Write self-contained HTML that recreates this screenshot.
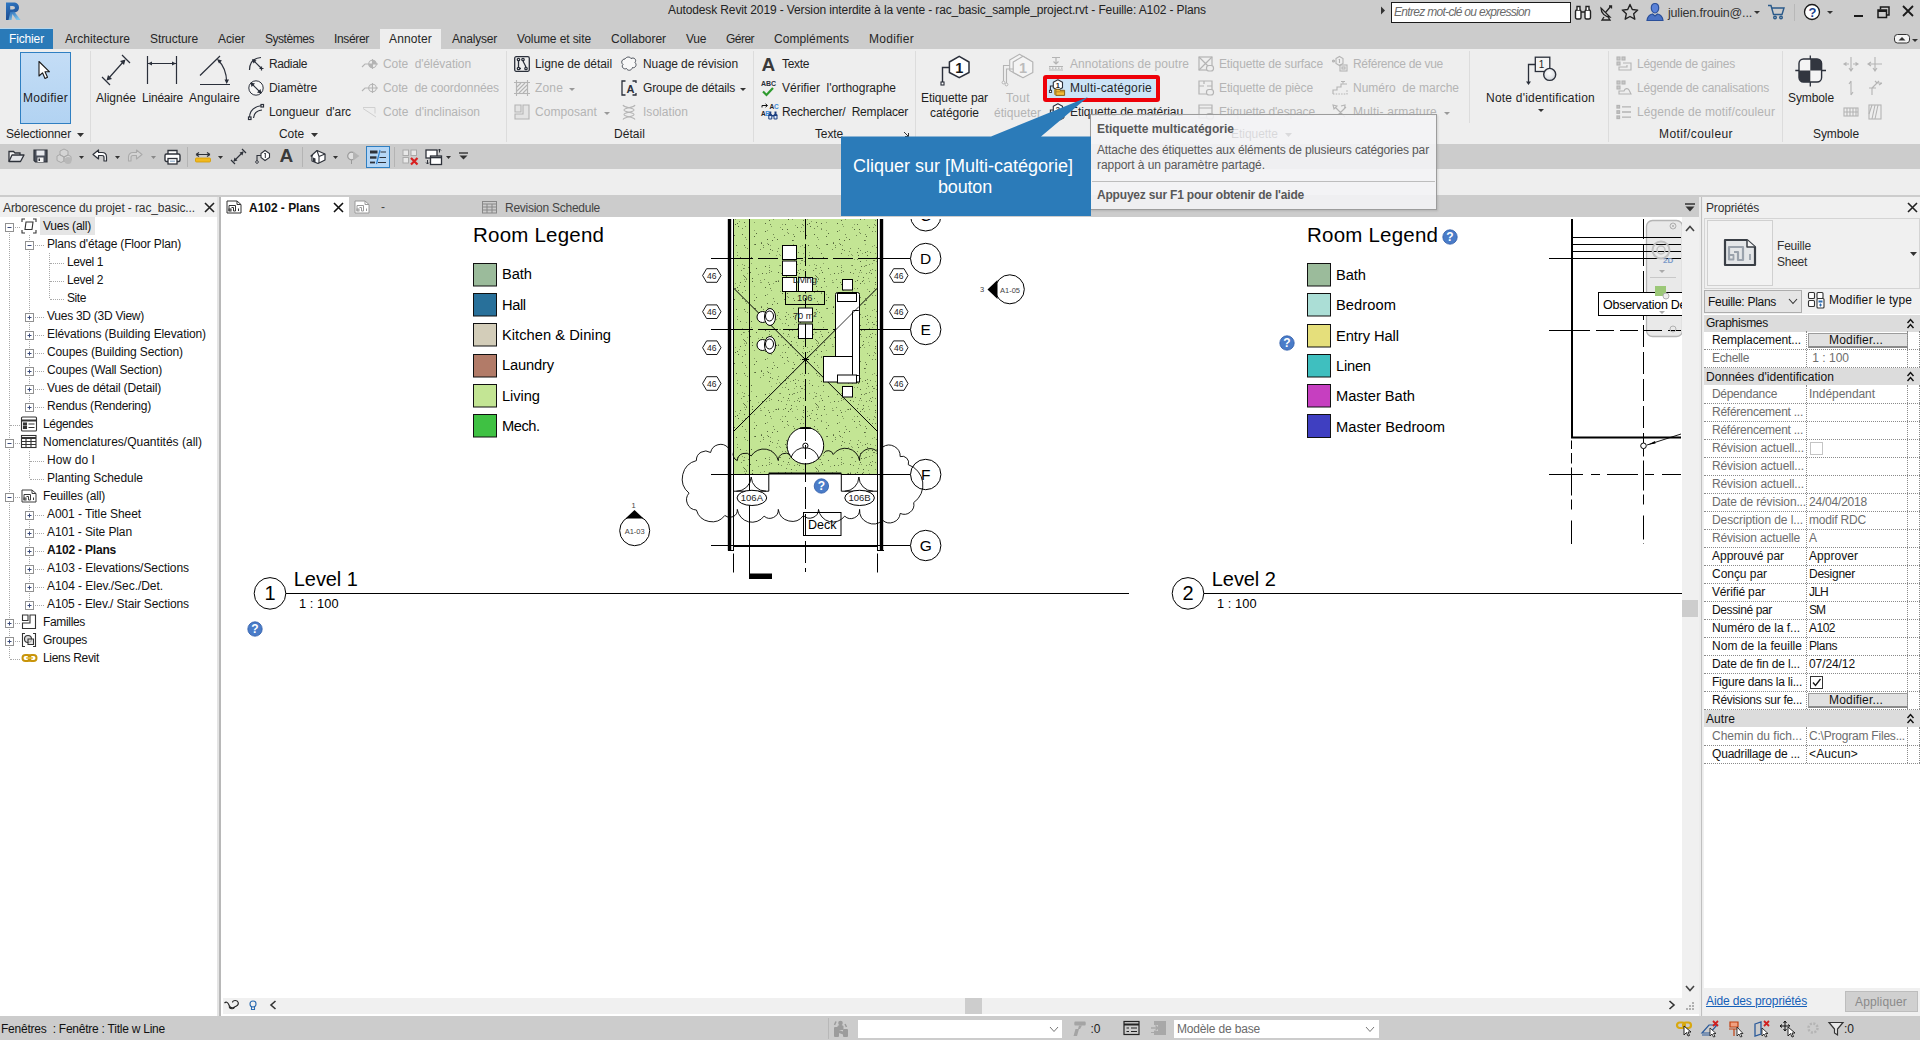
<!DOCTYPE html>
<html lang="fr"><head><meta charset="utf-8"><title>Autodesk Revit 2019</title>
<style>
html,body{margin:0;padding:0;}
body{width:1920px;height:1040px;overflow:hidden;background:#fff;position:relative;font-family:"Liberation Sans",sans-serif;font-size:12px;}
.t{position:absolute;white-space:pre;display:block;}
.b{position:absolute;display:block;overflow:visible;}
</style></head>
<body>
<div class="b" style="left:0px;top:197px;width:220px;height:820px;background:#f0f0f0;"></div><div class="b" style="left:0px;top:217px;width:217px;height:799px;background:#ffffff;"></div><div class="b" style="left:217px;top:197px;width:4px;height:819px;background:#e4e4e4;"></div><div class="b" style="left:219px;top:197px;width:1.5px;height:819px;background:#b8b8b8;"></div><span class="t" style="left:3px;top:199.0px;font-size:12px;line-height:18px;color:#333;letter-spacing:-0.111px;">Arborescence du projet - rac_basic...</span><svg class="b" style="left:204px;top:202px;" width="11" height="11" viewBox="0 0 11 11"><path d="M1 1L10 10M10 1L1 10" stroke="#222" stroke-width="1.600"/></svg><div class="b" style="left:9px;top:231px;width:0px;height:427px;border-left:1px dotted #a8a8a8;"></div><div class="b" style="left:29px;top:235px;width:0px;height:171px;border-left:1px dotted #a8a8a8;"></div><div class="b" style="left:49px;top:253px;width:0px;height:45px;border-left:1px dotted #a8a8a8;"></div><div class="b" style="left:29px;top:451px;width:0px;height:27px;border-left:1px dotted #a8a8a8;"></div><div class="b" style="left:29px;top:505px;width:0px;height:99px;border-left:1px dotted #a8a8a8;"></div><div class="b" style="left:40px;top:217px;width:55px;height:18px;background:#e5e5e5;"></div><div class="b" style="left:10px;top:227px;width:10px;height:0px;border-top:1px dotted #a8a8a8;"></div><svg class="b" style="left:4.5px;top:222.5px;" width="9" height="9" viewBox="0 0 9 9"><rect x="0.500" y="0.500" width="8" height="8" fill="#fff" stroke="#919191"/><path d="M2.500 4.500H6.500" stroke="#3a4a7a"/></svg><svg class="b" style="left:21px;top:218px;" width="16" height="16" viewBox="0 0 16 16"><g fill="none" stroke="#333" stroke-width="1.100"><path d="M1 4V1H4M12 1H15V4M15 12V15H12M4 15H1V12"/><path d="M5 4H12L11 11.500H4Z"/></g></svg><span class="t" style="left:43px;top:217.0px;font-size:12px;line-height:18px;color:#111;letter-spacing:-0.224px;">Vues (all)</span><div class="b" style="left:30px;top:245px;width:14px;height:0px;border-top:1px dotted #a8a8a8;"></div><svg class="b" style="left:24.5px;top:240.5px;" width="9" height="9" viewBox="0 0 9 9"><rect x="0.500" y="0.500" width="8" height="8" fill="#fff" stroke="#919191"/><path d="M2.500 4.500H6.500" stroke="#3a4a7a"/></svg><span class="t" style="left:47px;top:235.0px;font-size:12px;line-height:18px;color:#111;letter-spacing:-0.168px;">Plans d'étage (Floor Plan)</span><div class="b" style="left:50px;top:263px;width:14px;height:0px;border-top:1px dotted #a8a8a8;"></div><span class="t" style="left:67px;top:253.0px;font-size:12px;line-height:18px;color:#111;letter-spacing:-0.385px;">Level 1</span><div class="b" style="left:50px;top:281px;width:14px;height:0px;border-top:1px dotted #a8a8a8;"></div><span class="t" style="left:67px;top:271.0px;font-size:12px;line-height:18px;color:#111;letter-spacing:-0.385px;">Level 2</span><div class="b" style="left:50px;top:299px;width:14px;height:0px;border-top:1px dotted #a8a8a8;"></div><span class="t" style="left:67px;top:289.0px;font-size:12px;line-height:18px;color:#111;letter-spacing:-0.420px;">Site</span><div class="b" style="left:30px;top:317px;width:14px;height:0px;border-top:1px dotted #a8a8a8;"></div><svg class="b" style="left:24.5px;top:312.5px;" width="9" height="9" viewBox="0 0 9 9"><rect x="0.500" y="0.500" width="8" height="8" fill="#fff" stroke="#919191"/><path d="M2.500 4.500H6.500" stroke="#3a4a7a"/><path d="M4.500 2.500V6.500" stroke="#3a4a7a"/></svg><span class="t" style="left:47px;top:307.0px;font-size:12px;line-height:18px;color:#111;letter-spacing:-0.257px;">Vues 3D (3D View)</span><div class="b" style="left:30px;top:335px;width:14px;height:0px;border-top:1px dotted #a8a8a8;"></div><svg class="b" style="left:24.5px;top:330.5px;" width="9" height="9" viewBox="0 0 9 9"><rect x="0.500" y="0.500" width="8" height="8" fill="#fff" stroke="#919191"/><path d="M2.500 4.500H6.500" stroke="#3a4a7a"/><path d="M4.500 2.500V6.500" stroke="#3a4a7a"/></svg><span class="t" style="left:47px;top:325.0px;font-size:12px;line-height:18px;color:#111;letter-spacing:-0.100px;">Elévations (Building Elevation)</span><div class="b" style="left:30px;top:353px;width:14px;height:0px;border-top:1px dotted #a8a8a8;"></div><svg class="b" style="left:24.5px;top:348.5px;" width="9" height="9" viewBox="0 0 9 9"><rect x="0.500" y="0.500" width="8" height="8" fill="#fff" stroke="#919191"/><path d="M2.500 4.500H6.500" stroke="#3a4a7a"/><path d="M4.500 2.500V6.500" stroke="#3a4a7a"/></svg><span class="t" style="left:47px;top:343.0px;font-size:12px;line-height:18px;color:#111;letter-spacing:-0.110px;">Coupes (Building Section)</span><div class="b" style="left:30px;top:371px;width:14px;height:0px;border-top:1px dotted #a8a8a8;"></div><svg class="b" style="left:24.5px;top:366.5px;" width="9" height="9" viewBox="0 0 9 9"><rect x="0.500" y="0.500" width="8" height="8" fill="#fff" stroke="#919191"/><path d="M2.500 4.500H6.500" stroke="#3a4a7a"/><path d="M4.500 2.500V6.500" stroke="#3a4a7a"/></svg><span class="t" style="left:47px;top:361.0px;font-size:12px;line-height:18px;color:#111;letter-spacing:-0.187px;">Coupes (Wall Section)</span><div class="b" style="left:30px;top:389px;width:14px;height:0px;border-top:1px dotted #a8a8a8;"></div><svg class="b" style="left:24.5px;top:384.5px;" width="9" height="9" viewBox="0 0 9 9"><rect x="0.500" y="0.500" width="8" height="8" fill="#fff" stroke="#919191"/><path d="M2.500 4.500H6.500" stroke="#3a4a7a"/><path d="M4.500 2.500V6.500" stroke="#3a4a7a"/></svg><span class="t" style="left:47px;top:379.0px;font-size:12px;line-height:18px;color:#111;letter-spacing:-0.157px;">Vues de détail (Detail)</span><div class="b" style="left:30px;top:407px;width:14px;height:0px;border-top:1px dotted #a8a8a8;"></div><svg class="b" style="left:24.5px;top:402.5px;" width="9" height="9" viewBox="0 0 9 9"><rect x="0.500" y="0.500" width="8" height="8" fill="#fff" stroke="#919191"/><path d="M2.500 4.500H6.500" stroke="#3a4a7a"/><path d="M4.500 2.500V6.500" stroke="#3a4a7a"/></svg><span class="t" style="left:47px;top:397.0px;font-size:12px;line-height:18px;color:#111;letter-spacing:-0.226px;">Rendus (Rendering)</span><div class="b" style="left:10px;top:425px;width:10px;height:0px;border-top:1px dotted #a8a8a8;"></div><svg class="b" style="left:21px;top:416px;" width="16" height="16" viewBox="0 0 16 16"><g fill="none" stroke="#333" stroke-width="1.100"><rect x="0.500" y="1" width="15" height="14" rx="1"/><path d="M0.500 4.500H15.500" stroke-width="2"/><rect x="2.500" y="7" width="3" height="2" fill="#333"/><path d="M7.500 8H13.500M7.500 11.500H13.500"/><rect x="2.500" y="10.500" width="3" height="2" fill="#333"/></g></svg><span class="t" style="left:43px;top:415.0px;font-size:12px;line-height:18px;color:#111;letter-spacing:-0.340px;">Légendes</span><div class="b" style="left:10px;top:443px;width:10px;height:0px;border-top:1px dotted #a8a8a8;"></div><svg class="b" style="left:4.5px;top:438.5px;" width="9" height="9" viewBox="0 0 9 9"><rect x="0.500" y="0.500" width="8" height="8" fill="#fff" stroke="#919191"/><path d="M2.500 4.500H6.500" stroke="#3a4a7a"/></svg><svg class="b" style="left:21px;top:435px;" width="16" height="14" viewBox="0 0 16 14"><g fill="none" stroke="#333" stroke-width="1.100"><rect x="0.500" y="0.500" width="14.500" height="12"/><path d="M0.500 3H15" stroke-width="2"/><path d="M0.500 6.500H15M0.500 9.500H15M5 3V12.500M10 3V12.500"/></g></svg><span class="t" style="left:43px;top:433.0px;font-size:12px;line-height:18px;color:#111;letter-spacing:0.009px;">Nomenclatures/Quantités (all)</span><div class="b" style="left:30px;top:461px;width:14px;height:0px;border-top:1px dotted #a8a8a8;"></div><span class="t" style="left:47px;top:451.0px;font-size:12px;line-height:18px;color:#111;letter-spacing:0.081px;">How do I</span><div class="b" style="left:30px;top:479px;width:14px;height:0px;border-top:1px dotted #a8a8a8;"></div><span class="t" style="left:47px;top:469.0px;font-size:12px;line-height:18px;color:#111;letter-spacing:-0.044px;">Planting Schedule</span><div class="b" style="left:10px;top:497px;width:10px;height:0px;border-top:1px dotted #a8a8a8;"></div><svg class="b" style="left:4.5px;top:492.5px;" width="9" height="9" viewBox="0 0 9 9"><rect x="0.500" y="0.500" width="8" height="8" fill="#fff" stroke="#919191"/><path d="M2.500 4.500H6.500" stroke="#3a4a7a"/></svg><svg class="b" style="left:21px;top:489px;" width="16" height="14" viewBox="0 0 16 14"><g fill="none" stroke="#3c3c3c" stroke-width="1"><path d="M1 1H11L15 4.500V13H1Z" fill="#fff"/><path d="M11 1V4.500H15"/><path d="M3 11V5.500H9.500V11H7.500V7.500H5.500"/><rect x="3" y="9" width="2" height="2"/><path d="M12.500 8.500V11"/></g></svg><span class="t" style="left:43px;top:487.0px;font-size:12px;line-height:18px;color:#111;letter-spacing:-0.192px;">Feuilles (all)</span><div class="b" style="left:30px;top:515px;width:14px;height:0px;border-top:1px dotted #a8a8a8;"></div><svg class="b" style="left:24.5px;top:510.5px;" width="9" height="9" viewBox="0 0 9 9"><rect x="0.500" y="0.500" width="8" height="8" fill="#fff" stroke="#919191"/><path d="M2.500 4.500H6.500" stroke="#3a4a7a"/><path d="M4.500 2.500V6.500" stroke="#3a4a7a"/></svg><span class="t" style="left:47px;top:505.0px;font-size:12px;line-height:18px;color:#111;letter-spacing:-0.077px;">A001 - Title Sheet</span><div class="b" style="left:30px;top:533px;width:14px;height:0px;border-top:1px dotted #a8a8a8;"></div><svg class="b" style="left:24.5px;top:528.5px;" width="9" height="9" viewBox="0 0 9 9"><rect x="0.500" y="0.500" width="8" height="8" fill="#fff" stroke="#919191"/><path d="M2.500 4.500H6.500" stroke="#3a4a7a"/><path d="M4.500 2.500V6.500" stroke="#3a4a7a"/></svg><span class="t" style="left:47px;top:523.0px;font-size:12px;line-height:18px;color:#111;letter-spacing:-0.108px;">A101 - Site Plan</span><div class="b" style="left:30px;top:551px;width:14px;height:0px;border-top:1px dotted #a8a8a8;"></div><svg class="b" style="left:24.5px;top:546.5px;" width="9" height="9" viewBox="0 0 9 9"><rect x="0.500" y="0.500" width="8" height="8" fill="#fff" stroke="#919191"/><path d="M2.500 4.500H6.500" stroke="#3a4a7a"/><path d="M4.500 2.500V6.500" stroke="#3a4a7a"/></svg><span class="t" style="left:47px;top:541.0px;font-size:12px;line-height:18px;color:#111;font-weight:bold;letter-spacing:-0.197px;">A102 - Plans</span><div class="b" style="left:30px;top:569px;width:14px;height:0px;border-top:1px dotted #a8a8a8;"></div><svg class="b" style="left:24.5px;top:564.5px;" width="9" height="9" viewBox="0 0 9 9"><rect x="0.500" y="0.500" width="8" height="8" fill="#fff" stroke="#919191"/><path d="M2.500 4.500H6.500" stroke="#3a4a7a"/><path d="M4.500 2.500V6.500" stroke="#3a4a7a"/></svg><span class="t" style="left:47px;top:559.0px;font-size:12px;line-height:18px;color:#111;letter-spacing:-0.055px;">A103 - Elevations/Sections</span><div class="b" style="left:30px;top:587px;width:14px;height:0px;border-top:1px dotted #a8a8a8;"></div><svg class="b" style="left:24.5px;top:582.5px;" width="9" height="9" viewBox="0 0 9 9"><rect x="0.500" y="0.500" width="8" height="8" fill="#fff" stroke="#919191"/><path d="M2.500 4.500H6.500" stroke="#3a4a7a"/><path d="M4.500 2.500V6.500" stroke="#3a4a7a"/></svg><span class="t" style="left:47px;top:577.0px;font-size:12px;line-height:18px;color:#111;letter-spacing:-0.053px;">A104 - Elev./Sec./Det.</span><div class="b" style="left:30px;top:605px;width:14px;height:0px;border-top:1px dotted #a8a8a8;"></div><svg class="b" style="left:24.5px;top:600.5px;" width="9" height="9" viewBox="0 0 9 9"><rect x="0.500" y="0.500" width="8" height="8" fill="#fff" stroke="#919191"/><path d="M2.500 4.500H6.500" stroke="#3a4a7a"/><path d="M4.500 2.500V6.500" stroke="#3a4a7a"/></svg><span class="t" style="left:47px;top:595.0px;font-size:12px;line-height:18px;color:#111;letter-spacing:-0.114px;">A105 - Elev./ Stair Sections</span><div class="b" style="left:10px;top:623px;width:10px;height:0px;border-top:1px dotted #a8a8a8;"></div><svg class="b" style="left:4.5px;top:618.5px;" width="9" height="9" viewBox="0 0 9 9"><rect x="0.500" y="0.500" width="8" height="8" fill="#fff" stroke="#919191"/><path d="M2.500 4.500H6.500" stroke="#3a4a7a"/><path d="M4.500 2.500V6.500" stroke="#3a4a7a"/></svg><svg class="b" style="left:21px;top:614px;" width="16" height="16" viewBox="0 0 16 16"><g fill="#fff" stroke="#333" stroke-width="1.100"><path d="M1.500 1H7V6.500H1.500Z M9 1H14.500V14.500H1.500V9H9Z"/></g></svg><span class="t" style="left:43px;top:613.0px;font-size:12px;line-height:18px;color:#111;letter-spacing:-0.334px;">Familles</span><div class="b" style="left:10px;top:641px;width:10px;height:0px;border-top:1px dotted #a8a8a8;"></div><svg class="b" style="left:4.5px;top:636.5px;" width="9" height="9" viewBox="0 0 9 9"><rect x="0.500" y="0.500" width="8" height="8" fill="#fff" stroke="#919191"/><path d="M2.500 4.500H6.500" stroke="#3a4a7a"/><path d="M4.500 2.500V6.500" stroke="#3a4a7a"/></svg><svg class="b" style="left:21px;top:632px;" width="16" height="16" viewBox="0 0 16 16"><g fill="none" stroke="#333" stroke-width="1.100"><path d="M4 1.500H1.500V14.500H4M12 1.500H14.500V14.500H12"/><circle cx="7" cy="7" r="3.500" fill="#ddd"/><path d="M7 7H12.500V12.500H7Z" fill="#ddd" fill-opacity=".700"/></g></svg><span class="t" style="left:43px;top:631.0px;font-size:12px;line-height:18px;color:#111;letter-spacing:-0.290px;">Groupes</span><div class="b" style="left:10px;top:659px;width:10px;height:0px;border-top:1px dotted #a8a8a8;"></div><svg class="b" style="left:21px;top:653px;" width="17" height="10" viewBox="0 0 17 10"><g fill="none" stroke="#c8940a" stroke-width="2"><rect x="1.500" y="2" width="8" height="6" rx="3"/><rect x="7.500" y="2" width="8" height="6" rx="3"/></g><path d="M5 5H12" stroke="#e8c040" stroke-width="1.500"/></svg><span class="t" style="left:43px;top:649.0px;font-size:12px;line-height:18px;color:#111;letter-spacing:-0.306px;">Liens Revit</span>
<div class="b" style="left:222px;top:197px;width:1479px;height:20px;background:#cccccc;"></div><div class="b" style="left:222px;top:197px;width:127px;height:20px;background:#ffffff;"></div><svg class="b" style="left:226px;top:200px;" width="16" height="14" viewBox="0 0 16 14"><g fill="none" stroke="#333" stroke-width="1"><path d="M1 1H11L15 4.500V13H1Z" fill="#fff"/><path d="M11 1V4.500H15"/><path d="M3 11V5.500H9.500V11H7.500V7.500H5.500"/><rect x="3" y="9" width="2" height="2"/><path d="M12.500 8.500V11"/></g></svg><span class="t" style="left:249px;top:198.5px;font-size:12px;line-height:18px;color:#111;font-weight:bold;letter-spacing:-0.031px;">A102 - Plans</span><svg class="b" style="left:333px;top:202px;" width="11" height="11" viewBox="0 0 11 11"><path d="M1 1L10 10M10 1L1 10" stroke="#111" stroke-width="1.600"/></svg><svg class="b" style="left:354px;top:200px;" width="16" height="14" viewBox="0 0 16 14"><g fill="none" stroke="#9a9a9a" stroke-width="1"><path d="M1 1H11L15 4.500V13H1Z" fill="#fff"/><path d="M11 1V4.500H15"/><path d="M3 11V5.500H9.500V11H7.500V7.500H5.500"/><rect x="3" y="9" width="2" height="2"/><path d="M12.500 8.500V11"/></g></svg><span class="t" style="left:381px;top:198.0px;font-size:12px;line-height:18px;color:#444;">-</span><svg class="b" style="left:482px;top:201px;" width="15" height="13" viewBox="0 0 15 13"><g fill="none" stroke="#888" stroke-width="1"><rect x="0.500" y="0.500" width="14" height="11.500"/><path d="M0.500 3H14.500M0.500 6H14.500M0.500 9H14.500M5 3V12M10 3V12"/></g></svg><span class="t" style="left:505px;top:198.5px;font-size:12px;line-height:18px;color:#444;letter-spacing:-0.259px;">Revision Schedule</span><svg class="b" style="left:1685px;top:203px;" width="10" height="9" viewBox="0 0 10 9"><path d="M0 1H10" stroke="#333" stroke-width="1.500"/><path d="M0.500 3.500H9.500L5 8.500Z" fill="#333"/></svg>
<svg class="b" style="left:0;top:0" width="1920" height="1040" viewBox="0 0 1920 1040"><defs><pattern id="stip" width="72" height="64" patternUnits="userSpaceOnUse"><rect x="57" y="59" width="1" height="1" fill="#55663c" fill-opacity="0.75"/><rect x="65" y="24" width="1" height="1" fill="#55663c" fill-opacity="0.55"/><rect x="65" y="60" width="1" height="1" fill="#55663c" fill-opacity="1"/><rect x="23" y="12" width="1" height="1" fill="#55663c" fill-opacity="0.75"/><rect x="38" y="18" width="1" height="1" fill="#55663c" fill-opacity="0.55"/><rect x="68" y="5" width="1" height="1" fill="#55663c" fill-opacity="1"/><rect x="50" y="57" width="1" height="1" fill="#55663c" fill-opacity="1"/><rect x="20" y="1" width="1" height="1" fill="#55663c" fill-opacity="1"/><rect x="8" y="7" width="1" height="1" fill="#55663c" fill-opacity="0.55"/><rect x="24" y="30" width="1" height="1" fill="#55663c" fill-opacity="1"/><rect x="3" y="59" width="1" height="1" fill="#55663c" fill-opacity="0.75"/><rect x="56" y="25" width="1" height="1" fill="#55663c" fill-opacity="1"/><rect x="29" y="37" width="1" height="1" fill="#55663c" fill-opacity="0.75"/><rect x="0" y="10" width="1" height="1" fill="#55663c" fill-opacity="0.75"/><rect x="35" y="52" width="1" height="1" fill="#55663c" fill-opacity="1"/><rect x="10" y="32" width="1" height="1" fill="#55663c" fill-opacity="0.75"/><rect x="29" y="36" width="1" height="1" fill="#55663c" fill-opacity="0.55"/><rect x="8" y="13" width="1" height="1" fill="#55663c" fill-opacity="0.75"/><rect x="13" y="37" width="1" height="1" fill="#55663c" fill-opacity="0.75"/><rect x="8" y="2" width="1" height="1" fill="#55663c" fill-opacity="1"/><rect x="0" y="27" width="1" height="1" fill="#55663c" fill-opacity="0.55"/><rect x="6" y="60" width="1" height="1" fill="#55663c" fill-opacity="0.75"/><rect x="50" y="53" width="1" height="1" fill="#55663c" fill-opacity="0.55"/><rect x="25" y="34" width="1" height="1" fill="#55663c" fill-opacity="0.75"/><rect x="11" y="39" width="1" height="1" fill="#55663c" fill-opacity="0.75"/><rect x="1" y="52" width="1" height="1" fill="#55663c" fill-opacity="0.55"/><rect x="17" y="31" width="1" height="1" fill="#55663c" fill-opacity="1"/><rect x="12" y="1" width="1" height="1" fill="#55663c" fill-opacity="0.55"/><rect x="59" y="62" width="1" height="1" fill="#55663c" fill-opacity="0.55"/><rect x="71" y="24" width="1" height="1" fill="#55663c" fill-opacity="0.75"/><rect x="65" y="24" width="1" height="1" fill="#55663c" fill-opacity="1"/><rect x="16" y="53" width="1" height="1" fill="#55663c" fill-opacity="1"/><rect x="49" y="14" width="1" height="1" fill="#55663c" fill-opacity="0.75"/><rect x="53" y="27" width="1" height="1" fill="#55663c" fill-opacity="0.55"/><rect x="34" y="38" width="1" height="1" fill="#55663c" fill-opacity="0.55"/><rect x="26" y="23" width="1" height="1" fill="#55663c" fill-opacity="0.75"/><rect x="12" y="5" width="1" height="1" fill="#55663c" fill-opacity="0.55"/><rect x="27" y="56" width="1" height="1" fill="#55663c" fill-opacity="0.75"/><rect x="1" y="42" width="1" height="1" fill="#55663c" fill-opacity="0.75"/><rect x="49" y="9" width="1" height="1" fill="#55663c" fill-opacity="0.55"/><rect x="11" y="26" width="1" height="1" fill="#55663c" fill-opacity="1"/><rect x="31" y="1" width="1" height="1" fill="#55663c" fill-opacity="1"/><rect x="47" y="47" width="1" height="1" fill="#55663c" fill-opacity="1"/><rect x="58" y="16" width="1" height="1" fill="#55663c" fill-opacity="1"/><rect x="61" y="17" width="1" height="1" fill="#55663c" fill-opacity="0.75"/><rect x="23" y="19" width="1" height="1" fill="#55663c" fill-opacity="0.75"/><rect x="29" y="31" width="1" height="1" fill="#55663c" fill-opacity="1"/><rect x="24" y="20" width="1" height="1" fill="#55663c" fill-opacity="1"/><rect x="70" y="25" width="1" height="1" fill="#55663c" fill-opacity="1"/><rect x="49" y="61" width="1" height="1" fill="#55663c" fill-opacity="1"/><rect x="10" y="53" width="1" height="1" fill="#55663c" fill-opacity="0.55"/><rect x="13" y="13" width="1" height="1" fill="#55663c" fill-opacity="0.55"/><rect x="65" y="32" width="1" height="1" fill="#55663c" fill-opacity="0.55"/><rect x="50" y="32" width="1" height="1" fill="#55663c" fill-opacity="0.75"/><rect x="62" y="37" width="1" height="1" fill="#55663c" fill-opacity="1"/><rect x="22" y="8" width="1" height="1" fill="#55663c" fill-opacity="0.55"/><rect x="29" y="61" width="1" height="1" fill="#55663c" fill-opacity="1"/><rect x="9" y="35" width="1" height="1" fill="#55663c" fill-opacity="0.55"/><rect x="26" y="2" width="1" height="1" fill="#55663c" fill-opacity="0.55"/><rect x="34" y="52" width="1" height="1" fill="#55663c" fill-opacity="0.75"/><rect x="31" y="7" width="1" height="1" fill="#55663c" fill-opacity="0.55"/><rect x="22" y="36" width="1" height="1" fill="#55663c" fill-opacity="0.75"/><rect x="67" y="16" width="1" height="1" fill="#55663c" fill-opacity="0.55"/><rect x="46" y="17" width="1" height="1" fill="#55663c" fill-opacity="0.75"/><rect x="42" y="17" width="1" height="1" fill="#55663c" fill-opacity="1"/><rect x="4" y="2" width="1" height="1" fill="#55663c" fill-opacity="0.75"/><rect x="45" y="39" width="1" height="1" fill="#55663c" fill-opacity="0.55"/><rect x="2" y="9" width="1" height="1" fill="#55663c" fill-opacity="0.75"/><rect x="8" y="39" width="1" height="1" fill="#55663c" fill-opacity="0.75"/><rect x="17" y="9" width="1" height="1" fill="#55663c" fill-opacity="0.55"/><rect x="57" y="47" width="1" height="1" fill="#55663c" fill-opacity="1"/><rect x="5" y="16" width="1" height="1" fill="#55663c" fill-opacity="0.75"/><rect x="45" y="10" width="1" height="1" fill="#55663c" fill-opacity="1"/><rect x="60" y="9" width="1" height="1" fill="#55663c" fill-opacity="0.75"/><rect x="3" y="63" width="1" height="1" fill="#55663c" fill-opacity="1"/><rect x="1" y="48" width="1" height="1" fill="#55663c" fill-opacity="0.75"/><rect x="1" y="9" width="1" height="1" fill="#55663c" fill-opacity="0.55"/><rect x="11" y="14" width="1" height="1" fill="#55663c" fill-opacity="0.75"/><rect x="53" y="42" width="1" height="1" fill="#55663c" fill-opacity="0.75"/><rect x="58" y="56" width="1" height="1" fill="#55663c" fill-opacity="0.75"/><rect x="69" y="10" width="1" height="1" fill="#55663c" fill-opacity="1"/><rect x="65" y="3" width="1" height="1" fill="#55663c" fill-opacity="0.75"/><rect x="11" y="61" width="1" height="1" fill="#55663c" fill-opacity="0.55"/><rect x="29" y="14" width="1" height="1" fill="#55663c" fill-opacity="0.75"/><rect x="62" y="32" width="1" height="1" fill="#55663c" fill-opacity="0.55"/><rect x="47" y="38" width="1" height="1" fill="#55663c" fill-opacity="0.55"/><rect x="25" y="21" width="1" height="1" fill="#55663c" fill-opacity="0.75"/><rect x="56" y="63" width="1" height="1" fill="#55663c" fill-opacity="0.55"/><rect x="41" y="51" width="1" height="1" fill="#55663c" fill-opacity="1"/><rect x="32" y="25" width="1" height="1" fill="#55663c" fill-opacity="1"/><rect x="55" y="25" width="1" height="1" fill="#55663c" fill-opacity="0.55"/><rect x="49" y="28" width="1" height="1" fill="#55663c" fill-opacity="1"/><rect x="40" y="26" width="1" height="1" fill="#55663c" fill-opacity="0.55"/><rect x="17" y="63" width="1" height="1" fill="#55663c" fill-opacity="0.75"/><rect x="5" y="8" width="1" height="1" fill="#55663c" fill-opacity="0.75"/><rect x="21" y="14" width="1" height="1" fill="#55663c" fill-opacity="0.75"/><rect x="60" y="35" width="1" height="1" fill="#55663c" fill-opacity="0.55"/><rect x="52" y="48" width="1" height="1" fill="#55663c" fill-opacity="1"/><rect x="66" y="63" width="1" height="1" fill="#55663c" fill-opacity="1"/><rect x="40" y="57" width="1" height="1" fill="#55663c" fill-opacity="0.75"/><rect x="9" y="4" width="1" height="1" fill="#55663c" fill-opacity="0.75"/><rect x="5" y="35" width="1" height="1" fill="#55663c" fill-opacity="1"/><rect x="45" y="39" width="1" height="1" fill="#55663c" fill-opacity="1"/><rect x="2" y="17" width="1" height="1" fill="#55663c" fill-opacity="0.75"/><rect x="58" y="24" width="1" height="1" fill="#55663c" fill-opacity="0.55"/><rect x="34" y="30" width="1" height="1" fill="#55663c" fill-opacity="0.55"/><rect x="6" y="14" width="1" height="1" fill="#55663c" fill-opacity="0.75"/><rect x="13" y="47" width="1" height="1" fill="#55663c" fill-opacity="0.55"/><rect x="25" y="25" width="1" height="1" fill="#55663c" fill-opacity="0.75"/><rect x="32" y="22" width="1" height="1" fill="#55663c" fill-opacity="1"/><rect x="1" y="60" width="1" height="1" fill="#55663c" fill-opacity="1"/><rect x="4" y="22" width="1" height="1" fill="#55663c" fill-opacity="0.55"/><rect x="34" y="44" width="1" height="1" fill="#55663c" fill-opacity="1"/><rect x="66" y="20" width="1" height="1" fill="#55663c" fill-opacity="0.75"/><rect x="28" y="11" width="1" height="1" fill="#55663c" fill-opacity="0.75"/><rect x="49" y="16" width="1" height="1" fill="#55663c" fill-opacity="0.75"/><rect x="58" y="25" width="1" height="1" fill="#55663c" fill-opacity="1"/><rect x="0" y="48" width="1" height="1" fill="#55663c" fill-opacity="1"/><rect x="64" y="43" width="1" height="1" fill="#55663c" fill-opacity="0.75"/><rect x="41" y="26" width="1" height="1" fill="#55663c" fill-opacity="0.55"/><rect x="15" y="27" width="1" height="1" fill="#55663c" fill-opacity="0.55"/><rect x="49" y="11" width="1" height="1" fill="#55663c" fill-opacity="0.75"/><rect x="68" y="41" width="1" height="1" fill="#55663c" fill-opacity="0.75"/><rect x="2" y="44" width="1" height="1" fill="#55663c" fill-opacity="1"/><rect x="10" y="4" width="1" height="1" fill="#55663c" fill-opacity="0.75"/><rect x="43" y="53" width="1" height="1" fill="#55663c" fill-opacity="0.75"/><rect x="62" y="3" width="1" height="1" fill="#55663c" fill-opacity="0.55"/><rect x="8" y="54" width="1" height="1" fill="#55663c" fill-opacity="0.55"/><rect x="22" y="42" width="1" height="1" fill="#55663c" fill-opacity="1"/><rect x="17" y="60" width="1" height="1" fill="#55663c" fill-opacity="0.55"/><rect x="66" y="56" width="1" height="1" fill="#55663c" fill-opacity="0.75"/><rect x="11" y="28" width="1" height="1" fill="#55663c" fill-opacity="0.75"/><rect x="67" y="37" width="1" height="1" fill="#55663c" fill-opacity="1"/><rect x="71" y="21" width="1" height="1" fill="#55663c" fill-opacity="1"/><rect x="65" y="32" width="1" height="1" fill="#55663c" fill-opacity="0.75"/><rect x="48" y="26" width="1" height="1" fill="#55663c" fill-opacity="0.75"/><rect x="18" y="34" width="1" height="1" fill="#55663c" fill-opacity="1"/><rect x="63" y="25" width="1" height="1" fill="#55663c" fill-opacity="0.75"/><rect x="68" y="14" width="1" height="1" fill="#55663c" fill-opacity="1"/><rect x="0" y="48" width="1" height="1" fill="#55663c" fill-opacity="0.55"/><rect x="68" y="5" width="1" height="1" fill="#55663c" fill-opacity="1"/><rect x="51" y="15" width="1" height="1" fill="#55663c" fill-opacity="0.75"/><rect x="11" y="21" width="1" height="1" fill="#55663c" fill-opacity="0.55"/><rect x="68" y="58" width="1" height="1" fill="#55663c" fill-opacity="0.75"/><rect x="51" y="34" width="1" height="1" fill="#55663c" fill-opacity="0.55"/><rect x="60" y="63" width="1" height="1" fill="#55663c" fill-opacity="0.55"/><rect x="43" y="55" width="1" height="1" fill="#55663c" fill-opacity="0.75"/><rect x="67" y="40" width="1" height="1" fill="#55663c" fill-opacity="0.55"/><rect x="24" y="53" width="1" height="1" fill="#55663c" fill-opacity="1"/><rect x="3" y="33" width="1" height="1" fill="#55663c" fill-opacity="0.55"/><rect x="2" y="4" width="1" height="1" fill="#55663c" fill-opacity="0.55"/><rect x="19" y="29" width="1" height="1" fill="#55663c" fill-opacity="0.55"/><rect x="36" y="41" width="1" height="1" fill="#55663c" fill-opacity="1"/><rect x="45" y="31" width="1" height="1" fill="#55663c" fill-opacity="1"/><rect x="63" y="13" width="1" height="1" fill="#55663c" fill-opacity="0.75"/><rect x="15" y="32" width="1" height="1" fill="#55663c" fill-opacity="1"/><rect x="25" y="55" width="1" height="1" fill="#55663c" fill-opacity="0.55"/><rect x="48" y="52" width="1" height="1" fill="#55663c" fill-opacity="1"/><rect x="20" y="26" width="1" height="1" fill="#55663c" fill-opacity="1"/><rect x="68" y="27" width="1" height="1" fill="#55663c" fill-opacity="1"/><rect x="27" y="17" width="1" height="1" fill="#55663c" fill-opacity="0.55"/><rect x="44" y="23" width="1" height="1" fill="#55663c" fill-opacity="0.75"/><rect x="40" y="24" width="1" height="1" fill="#55663c" fill-opacity="0.55"/><rect x="24" y="12" width="1" height="1" fill="#55663c" fill-opacity="0.55"/><rect x="30" y="16" width="1" height="1" fill="#55663c" fill-opacity="1"/><rect x="11" y="33" width="1" height="1" fill="#55663c" fill-opacity="0.75"/><rect x="12" y="55" width="1" height="1" fill="#55663c" fill-opacity="0.75"/><rect x="69" y="16" width="1" height="1" fill="#55663c" fill-opacity="0.55"/><rect x="51" y="2" width="1" height="1" fill="#55663c" fill-opacity="0.55"/><rect x="25" y="45" width="1" height="1" fill="#55663c" fill-opacity="0.75"/><rect x="14" y="43" width="1" height="1" fill="#55663c" fill-opacity="1"/><rect x="24" y="9" width="1" height="1" fill="#55663c" fill-opacity="0.75"/><rect x="13" y="3" width="1" height="1" fill="#55663c" fill-opacity="0.55"/><rect x="70" y="61" width="1" height="1" fill="#55663c" fill-opacity="0.55"/><rect x="24" y="23" width="1" height="1" fill="#55663c" fill-opacity="0.55"/><rect x="26" y="22" width="1" height="1" fill="#55663c" fill-opacity="0.55"/><rect x="36" y="12" width="1" height="1" fill="#55663c" fill-opacity="1"/><rect x="7" y="17" width="1" height="1" fill="#55663c" fill-opacity="1"/><rect x="59" y="9" width="1" height="1" fill="#55663c" fill-opacity="0.55"/><rect x="41" y="50" width="1" height="1" fill="#55663c" fill-opacity="0.75"/><rect x="54" y="45" width="1" height="1" fill="#55663c" fill-opacity="0.75"/><rect x="26" y="47" width="1" height="1" fill="#55663c" fill-opacity="0.55"/><rect x="5" y="25" width="1" height="1" fill="#55663c" fill-opacity="0.55"/><rect x="52" y="58" width="1" height="1" fill="#55663c" fill-opacity="0.75"/><rect x="47" y="51" width="1" height="1" fill="#55663c" fill-opacity="0.55"/></pattern><clipPath id="cv"><rect x="221" y="219" width="1461" height="778.500"/></clipPath></defs><g clip-path="url(#cv)"><text x="473" y="242" font-family="Liberation Sans, sans-serif" font-size="20.5" fill="#000" text-anchor="start" textLength="131" lengthAdjust="spacing" >Room Legend</text><rect x="473.500" y="263.5" width="23" height="22.500" fill="#9bbb9b" stroke="#111" stroke-width="1"/><text x="502" y="278.8" font-family="Liberation Sans, sans-serif" font-size="14.7" fill="#000" text-anchor="start" textLength="30" lengthAdjust="spacing" >Bath</text><rect x="473.500" y="293.5" width="23" height="22.500" fill="#28709a" stroke="#111" stroke-width="1"/><text x="502" y="309.7" font-family="Liberation Sans, sans-serif" font-size="14.7" fill="#000" text-anchor="start" textLength="24" lengthAdjust="spacing" >Hall</text><rect x="473.500" y="323.5" width="23" height="22.500" fill="#d3cdb9" stroke="#111" stroke-width="1"/><text x="502" y="340.2" font-family="Liberation Sans, sans-serif" font-size="14.7" fill="#000" text-anchor="start" textLength="109" lengthAdjust="spacing" >Kitchen &amp; Dining</text><rect x="473.500" y="354.5" width="23" height="22.500" fill="#b27b68" stroke="#111" stroke-width="1"/><text x="502" y="370.2" font-family="Liberation Sans, sans-serif" font-size="14.7" fill="#000" text-anchor="start" textLength="52" lengthAdjust="spacing" >Laundry</text><rect x="473.500" y="384.5" width="23" height="22.500" fill="#c3e594" stroke="#111" stroke-width="1"/><text x="502" y="400.9" font-family="Liberation Sans, sans-serif" font-size="14.7" fill="#000" text-anchor="start" textLength="38" lengthAdjust="spacing" >Living</text><rect x="473.500" y="414.5" width="23" height="22.500" fill="#3fc143" stroke="#111" stroke-width="1"/><text x="502" y="431" font-family="Liberation Sans, sans-serif" font-size="14.7" fill="#000" text-anchor="start" textLength="38" lengthAdjust="spacing" >Mech.</text><text x="1307" y="242" font-family="Liberation Sans, sans-serif" font-size="20.5" fill="#000" text-anchor="start" textLength="131" lengthAdjust="spacing" >Room Legend</text><circle cx="1450" cy="237" r="7.200" fill="#4a7cc8" stroke="#2e5ca8" stroke-width=".800"/><text x="1450" y="241.3" font-family="Liberation Sans, sans-serif" font-size="12" font-weight="bold" fill="#fff" text-anchor="middle">?</text><rect x="1307.500" y="263.5" width="23" height="22.5" fill="#9bbb9b" stroke="#111" stroke-width="1"/><text x="1336" y="280.2" font-family="Liberation Sans, sans-serif" font-size="14.7" fill="#000" text-anchor="start" textLength="30" lengthAdjust="spacing" >Bath</text><rect x="1307.500" y="293.5" width="23" height="22.5" fill="#abded6" stroke="#111" stroke-width="1"/><text x="1336" y="310.2" font-family="Liberation Sans, sans-serif" font-size="14.7" fill="#000" text-anchor="start" textLength="60" lengthAdjust="spacing" >Bedroom</text><rect x="1307.500" y="324.5" width="23" height="22.5" fill="#e5df7b" stroke="#111" stroke-width="1"/><text x="1336" y="341.2" font-family="Liberation Sans, sans-serif" font-size="14.7" fill="#000" text-anchor="start" textLength="63" lengthAdjust="spacing" >Entry Hall</text><rect x="1307.500" y="354.5" width="23" height="22.5" fill="#3fbfbf" stroke="#111" stroke-width="1"/><text x="1336" y="371.2" font-family="Liberation Sans, sans-serif" font-size="14.7" fill="#000" text-anchor="start" textLength="35" lengthAdjust="spacing" >Linen</text><rect x="1307.500" y="384.5" width="23" height="22.5" fill="#c63fc0" stroke="#111" stroke-width="1"/><text x="1336" y="401.2" font-family="Liberation Sans, sans-serif" font-size="14.7" fill="#000" text-anchor="start" textLength="79" lengthAdjust="spacing" >Master Bath</text><rect x="1307.500" y="414.5" width="23" height="23" fill="#3f3fc1" stroke="#111" stroke-width="1"/><text x="1336" y="431.7" font-family="Liberation Sans, sans-serif" font-size="14.7" fill="#000" text-anchor="start" textLength="109" lengthAdjust="spacing" >Master Bedroom</text><circle cx="1287" cy="343" r="7.200" fill="#4a7cc8" stroke="#2e5ca8" stroke-width=".800"/><text x="1287" y="347.3" font-family="Liberation Sans, sans-serif" font-size="12" font-weight="bold" fill="#fff" text-anchor="middle">?</text><circle cx="270" cy="593.400" r="15.800" fill="#fff" stroke="#000" stroke-width="1"/><text x="270" y="600.3" font-family="Liberation Sans, sans-serif" font-size="20" fill="#000" text-anchor="middle" >1</text><path d="M285.8 593.500H1129" stroke="#000" stroke-width="1"/><text x="293.8" y="586" font-family="Liberation Sans, sans-serif" font-size="20" fill="#000" text-anchor="start" textLength="64" lengthAdjust="spacing" >Level 1</text><text x="299" y="607.8" font-family="Liberation Sans, sans-serif" font-size="12.8" fill="#000" text-anchor="start" textLength="39.5" lengthAdjust="spacing" >1 : 100</text><circle cx="1188" cy="593.400" r="15.800" fill="#fff" stroke="#000" stroke-width="1"/><text x="1188" y="600.3" font-family="Liberation Sans, sans-serif" font-size="20" fill="#000" text-anchor="middle" >2</text><path d="M1203.8 593.500H1682" stroke="#000" stroke-width="1"/><text x="1211.8" y="586" font-family="Liberation Sans, sans-serif" font-size="20" fill="#000" text-anchor="start" textLength="64" lengthAdjust="spacing" >Level 2</text><text x="1217" y="607.8" font-family="Liberation Sans, sans-serif" font-size="12.8" fill="#000" text-anchor="start" textLength="39.5" lengthAdjust="spacing" >1 : 100</text><circle cx="255" cy="629" r="7.200" fill="#4a7cc8" stroke="#2e5ca8" stroke-width=".800"/><text x="255" y="633.3" font-family="Liberation Sans, sans-serif" font-size="12" font-weight="bold" fill="#fff" text-anchor="middle">?</text><rect x="733" y="217" width="145" height="257" fill="#c3e594"/><rect x="733" y="217" width="145" height="257" fill="url(#stip)"/><path d="M729.500 217V550.500M881.500 217V550.500" stroke="#000" fill="none" stroke-width="3.400"/><path d="M733.500 217V550.500M877.500 217V550.500" stroke="#000" fill="none" stroke-width="1"/><path d="M728 550.500H734M877 550.500H884" stroke="#000" fill="none" stroke-width="1"/><path d="M749.500 217V576" stroke="#000" fill="none" stroke-width="1"/><rect x="749" y="573.500" width="23" height="5.500" fill="#000"/><path d="M805.500 217V572" stroke="#000" fill="none" stroke-width="1" stroke-dasharray="22 5"/><path d="M733.500 553.500V572.500M877.500 553.500V572.500" stroke="#000" fill="none" stroke-width="1"/><path d="M711 258.5H733M878 258.5H910.500" stroke="#000" fill="none" stroke-width="1"/><circle cx="925.700" cy="258.5" r="15.200" fill="#fff" stroke="#000" stroke-width="1"/><text x="925.7" y="264.0" font-family="Liberation Sans, sans-serif" font-size="15.5" fill="#000" text-anchor="middle" >D</text><path d="M711 329.5H733M878 329.5H910.500" stroke="#000" fill="none" stroke-width="1"/><circle cx="925.700" cy="329.5" r="15.200" fill="#fff" stroke="#000" stroke-width="1"/><text x="925.7" y="335.0" font-family="Liberation Sans, sans-serif" font-size="15.5" fill="#000" text-anchor="middle" >E</text><path d="M711 474.5H733M878 474.5H910.500" stroke="#000" fill="none" stroke-width="1"/><circle cx="925.700" cy="474.5" r="15.200" fill="#fff" stroke="#000" stroke-width="1"/><text x="925.7" y="480.0" font-family="Liberation Sans, sans-serif" font-size="15.5" fill="#000" text-anchor="middle" >F</text><path d="M711 545.5H733M878 545.5H910.500" stroke="#000" fill="none" stroke-width="1"/><circle cx="925.700" cy="545.5" r="15.200" fill="#fff" stroke="#000" stroke-width="1"/><text x="925.7" y="551.0" font-family="Liberation Sans, sans-serif" font-size="15.5" fill="#000" text-anchor="middle" >G</text><path d="M733 258.500H878M733 329.500H878" stroke="#000" fill="none" stroke-width="1" stroke-dasharray="20 5"/><circle cx="925.700" cy="215.800" r="15.200" fill="#fff" stroke="#000"/><text x="925.7" y="221.3" font-family="Liberation Sans, sans-serif" font-size="15.5" fill="#000" text-anchor="middle" >C</text><path d="M733.500 288L877.500 431.500M877.500 288L733.500 431.500" stroke="#000" fill="none" stroke-width="1"/><path d="M802 359.500H809M805.500 356V363M803 357L808 362M808 357L803 362" stroke="#000" fill="none" stroke-width="1"/><rect x="782.5" y="245.5" width="14" height="14" fill="#fff" stroke="#000" stroke-width="1"/><rect x="782.5" y="261" width="14" height="14.5" fill="#fff" stroke="#000" stroke-width="1"/><rect x="782.5" y="277.5" width="14" height="14" fill="#fff" stroke="#000" stroke-width="1"/><rect x="798.5" y="277.5" width="14" height="14" fill="#fff" stroke="#000" stroke-width="1"/><rect x="798.5" y="308" width="14" height="14" fill="#fff" stroke="#000" stroke-width="1"/><rect x="798.5" y="324" width="14" height="14.5" fill="#fff" stroke="#000" stroke-width="1"/><rect x="842.5" y="279.5" width="10" height="10.5" fill="#fff" stroke="#000" stroke-width="1"/><rect x="842.5" y="386.5" width="10" height="10.5" fill="#fff" stroke="#000" stroke-width="1"/><rect x="785.500" y="291.500" width="39" height="13" fill="none" stroke="#000"/><rect x="835.500" y="292.500" width="24" height="89.500" rx="2" fill="#fff" stroke="#000" stroke-width="1"/><rect x="823.500" y="356.500" width="36" height="25.500" fill="#fff" stroke="#000" stroke-width="1"/><rect x="852.500" y="310.500" width="7" height="65" rx="1" fill="#fff" stroke="#000" stroke-width="1"/><rect x="837.500" y="293.500" width="19" height="8" fill="#fff" stroke="#000" stroke-width="1"/><rect x="837.500" y="375" width="19" height="8" fill="#fff" stroke="#000" stroke-width="1"/><path d="M805.500 324V338" stroke="#000" fill="none"/><path d="M835.500 330L859 306.500" stroke="#000" fill="none" stroke-width=".800"/><circle cx="762.500" cy="317" r="5.500" fill="#fff" stroke="#000" stroke-width="1"/><ellipse cx="770" cy="317" rx="5.500" ry="8.500" fill="#fff" stroke="#000" stroke-width="1"/><ellipse cx="769.500" cy="316" rx="4" ry="5" fill="#fff" stroke="#000" stroke-width="1"/><circle cx="762.500" cy="345" r="5.500" fill="#fff" stroke="#000" stroke-width="1"/><ellipse cx="770" cy="345" rx="5.500" ry="8.500" fill="#fff" stroke="#000" stroke-width="1"/><ellipse cx="769.500" cy="344" rx="4" ry="5" fill="#fff" stroke="#000" stroke-width="1"/><text x="804.8" y="283.3" font-family="Liberation Sans, sans-serif" font-size="9.3" fill="#222" text-anchor="middle" >Living</text><text x="804.8" y="301.3" font-family="Liberation Sans, sans-serif" font-size="9.3" fill="#222" text-anchor="middle" >106</text><text x="804.8" y="318.5" font-family="Liberation Sans, sans-serif" font-size="9.3" fill="#222" text-anchor="middle" >70 m²</text><path d="M702.5999999999999 275.5L706.5999999999999 268.7H717.0L721.0 275.5L717.0 282.3H706.5999999999999Z" fill="#fff" stroke="#000" stroke-width=".900"/><text x="711.8" y="278.7" font-family="Liberation Sans, sans-serif" font-size="8.5" fill="#222" text-anchor="middle" >46</text><path d="M889.5999999999999 275.5L893.5999999999999 268.7H904.0L908.0 275.5L904.0 282.3H893.5999999999999Z" fill="#fff" stroke="#000" stroke-width=".900"/><text x="898.8" y="278.7" font-family="Liberation Sans, sans-serif" font-size="8.5" fill="#222" text-anchor="middle" >46</text><path d="M702.5999999999999 311.7L706.5999999999999 304.9H717.0L721.0 311.7L717.0 318.5H706.5999999999999Z" fill="#fff" stroke="#000" stroke-width=".900"/><text x="711.8" y="314.9" font-family="Liberation Sans, sans-serif" font-size="8.5" fill="#222" text-anchor="middle" >46</text><path d="M889.5999999999999 311.7L893.5999999999999 304.9H904.0L908.0 311.7L904.0 318.5H893.5999999999999Z" fill="#fff" stroke="#000" stroke-width=".900"/><text x="898.8" y="314.9" font-family="Liberation Sans, sans-serif" font-size="8.5" fill="#222" text-anchor="middle" >46</text><path d="M702.5999999999999 347.7L706.5999999999999 340.9H717.0L721.0 347.7L717.0 354.5H706.5999999999999Z" fill="#fff" stroke="#000" stroke-width=".900"/><text x="711.8" y="350.9" font-family="Liberation Sans, sans-serif" font-size="8.5" fill="#222" text-anchor="middle" >46</text><path d="M889.5999999999999 347.7L893.5999999999999 340.9H904.0L908.0 347.7L904.0 354.5H893.5999999999999Z" fill="#fff" stroke="#000" stroke-width=".900"/><text x="898.8" y="350.9" font-family="Liberation Sans, sans-serif" font-size="8.5" fill="#222" text-anchor="middle" >46</text><path d="M702.5999999999999 383.5L706.5999999999999 376.7H717.0L721.0 383.5L717.0 390.3H706.5999999999999Z" fill="#fff" stroke="#000" stroke-width=".900"/><text x="711.8" y="386.7" font-family="Liberation Sans, sans-serif" font-size="8.5" fill="#222" text-anchor="middle" >46</text><path d="M889.5999999999999 383.5L893.5999999999999 376.7H904.0L908.0 383.5L904.0 390.3H893.5999999999999Z" fill="#fff" stroke="#000" stroke-width=".900"/><text x="898.8" y="386.7" font-family="Liberation Sans, sans-serif" font-size="8.5" fill="#222" text-anchor="middle" >46</text><circle cx="805.400" cy="445.700" r="18.300" fill="#fff" stroke="#000" stroke-width="1"/><path d="M791 457.500A14.500 14.500 0 0 1 819 459.500" stroke="#000" fill="none" stroke-width=".900"/><circle cx="805.400" cy="445.700" r="2.600" fill="#fff" stroke="#000" stroke-width="1"/><path d="M800 428.200H811" stroke="#000" fill="none" stroke-width="1.600"/><path d="M805.500 427V473" stroke="#000" fill="none" stroke-width="1" stroke-dasharray="14 4"/><path d="M733.6 451.8A6.7 6.7 0 0 0 737.3 460.6" stroke="#000" fill="none" stroke-width=".900"/><path d="M737.3 460.6A7.9 7.9 0 0 1 751.2 455.9A14.9 14.9 0 0 1 778.3 460.6A7.2 7.2 0 0 1 790.5 455.2" stroke="#000" fill="none" stroke-width=".900"/><path d="M823.7 453.2A5.2 5.2 0 0 1 833.2 454.5A14.6 14.6 0 0 1 859.6 460.6A10.6 10.6 0 0 1 876.8 451.1" stroke="#000" fill="none" stroke-width=".900"/><path d="M768.800 473.500H841.300" stroke="#000" fill="none" stroke-width="2"/><path d="M733.600 491.200H768.800V473.500M877.500 491.200H841.300V473.500" stroke="#000" fill="none" stroke-width="1"/><path d="M733.500 474.500H769M841 474.500H878" stroke="#000" fill="none" stroke-width="1"/><path d="M751.200 477A14.800 14.800 0 0 1 736.400 491.200M751.200 477A14.800 14.800 0 0 0 766 491.200" stroke="#000" fill="none" stroke-width=".900"/><path d="M858.900 477A14.500 14.500 0 0 1 844.700 491.200M858.900 477A14.500 14.500 0 0 0 873.100 491.200" stroke="#000" fill="none" stroke-width=".900"/><path d="M728.2 447.8A10.2 10.2 0 0 0 710.6 452.5A9.2 9.2 0 0 0 696.4 460.6A18.7 18.7 0 0 0 689.0 493.1A10.3 10.3 0 0 0 696.4 510.0A16.2 16.2 0 0 0 724.8 515.5" fill="none" stroke="#000" stroke-width=".900"/><path d="M882.6 447.1A11.2 11.2 0 0 1 900.2 456.6A6.4 6.4 0 0 1 908.3 464.7A21.4 21.4 0 0 1 913.7 502.6A9.7 9.7 0 0 1 900.2 513.4A10.6 10.6 0 0 1 882.6 520.2" fill="none" stroke="#000" stroke-width=".900"/><path d="M724.8 515.5A7.5 7.5 0 0 0 737.3 509.4A14.9 14.9 0 0 0 764.1 516.1A8.5 8.5 0 0 0 778.3 509.4A13.9 13.9 0 0 0 803.4 515.5A8.8 8.8 0 0 0 818.5 509.4A14.6 14.6 0 0 0 844.7 516.1A8.8 8.8 0 0 0 859.6 509.4A13.7 13.7 0 0 0 882.6 520.2" fill="none" stroke="#000" stroke-width=".900"/><ellipse cx="751.9" cy="497.900" rx="14.800" ry="7.600" fill="#fff" stroke="#000" stroke-width="1"/><text x="751.9" y="501.2" font-family="Liberation Sans, sans-serif" font-size="9.5" fill="#222" text-anchor="middle" >106A</text><ellipse cx="859.6" cy="497.900" rx="14.800" ry="7.600" fill="#fff" stroke="#000" stroke-width="1"/><text x="859.6" y="501.2" font-family="Liberation Sans, sans-serif" font-size="9.5" fill="#222" text-anchor="middle" >106B</text><rect x="803.500" y="512.500" width="37.500" height="23" fill="none" stroke="#000"/><text x="822.2" y="528.5" font-family="Liberation Sans, sans-serif" font-size="12.5" fill="#000" text-anchor="middle" >Deck</text><path d="M733.500 546H877.500" stroke="#000" fill="none" stroke-width="2.200"/><circle cx="821.4" cy="486" r="7.200" fill="#4a7cc8" stroke="#2e5ca8" stroke-width=".800"/><text x="821.4" y="490.3" font-family="Liberation Sans, sans-serif" font-size="12" font-weight="bold" fill="#fff" text-anchor="middle">?</text><circle cx="1009.800" cy="289.300" r="14.500" fill="#fff" stroke="#000"/><path d="M987.500 289.500L997.500 280V299Z" fill="#000"/><text x="1010" y="292.5" font-family="Liberation Sans, sans-serif" font-size="7.5" fill="#444" text-anchor="middle" >A1-05</text><text x="982" y="291.5" font-family="Liberation Sans, sans-serif" font-size="7.5" fill="#444" text-anchor="middle" >3</text><circle cx="634.700" cy="530.700" r="15" fill="#fff" stroke="#000"/><path d="M634.500 510L643.500 518.500H625.500Z" fill="#000"/><text x="634.7" y="534" font-family="Liberation Sans, sans-serif" font-size="7.5" fill="#444" text-anchor="middle" >A1-03</text><text x="633.5" y="508" font-family="Liberation Sans, sans-serif" font-size="7.5" fill="#444" text-anchor="middle" >1</text><rect x="1646.500" y="220.500" width="36" height="116" rx="6" fill="#e9e9e9" stroke="#b4b4b4" stroke-width="1.300"/><path d="M1572 217V437.500H1681" stroke="#000" fill="none" stroke-width="2"/><path d="M1572 237.500H1681M1572 244.500H1681M1572 251.500H1681M1549 258.500H1681" stroke="#000" fill="none" stroke-width="1"/><path d="M1643.500 217V443" stroke="#000" fill="none" stroke-width="1" stroke-dasharray="22 5"/><path d="M1643.500 448.500V544" stroke="#000" fill="none" stroke-width="1" stroke-dasharray="8 4 30 4 10 11 24 4"/><path d="M1549 330.500H1572" stroke="#000" fill="none"/><path d="M1572 330.500H1681" stroke="#000" fill="none" stroke-dasharray="18 6"/><path d="M1571.500 440.500V544" stroke="#000" fill="none" stroke-dasharray="8.500 4 10.500 4 28 4 10 11 24 4"/><path d="M1549 474.500H1681" stroke="#000" fill="none" stroke-dasharray="34 8 9 7 31 7 9 8 30"/><rect x="1598.500" y="292.500" width="90" height="23" fill="#fff" stroke="#000"/><text x="1603" y="308.8" font-family="Liberation Sans, sans-serif" font-size="12.5" fill="#000" text-anchor="start" textLength="95.5" lengthAdjust="spacing" >Observation Deck</text><circle cx="1643.500" cy="445.800" r="2.800" fill="#fff" stroke="#000"/><path d="M1647 445L1681 434" stroke="#000" fill="none" stroke-width=".900"/><path d="M1648 444.800L1655 441L1655.500 443.500Z" fill="#000"/><circle cx="1673" cy="226" r="3" fill="none" stroke="#b0b0b0"/><path d="M1671.500 224.500L1674.500 227.500M1674.500 224.500L1671.500 227.500" stroke="#b0b0b0" stroke-width=".800"/><circle cx="1661" cy="250" r="8.500" fill="none" stroke="#c0c0c0" stroke-width="2"/><circle cx="1661" cy="250" r="4" fill="none" stroke="#c0c0c0" stroke-width="1.500"/><text x="1663" y="263" font-family="Liberation Sans, sans-serif" font-size="8" fill="#7a9ac8" text-anchor="start" font-weight="bold">2D</text><path d="M1659 270H1665L1662 273Z" fill="#aaa"/><path d="M1650 277.500H1676" stroke="#c8c8c8"/><rect x="1655" y="286" width="11" height="10" fill="#9cc878"/><circle cx="1666" cy="296" r="3" fill="#eee" stroke="#b0b0b0"/><path d="M1659 311H1665L1662 314Z" fill="#aaa"/><circle cx="1673" cy="329" r="3" fill="none" stroke="#b0b0b0"/></g></svg>
<div class="b" style="left:1682px;top:217px;width:17px;height:797px;background:#f0f0f0;"></div><svg class="b" style="left:1684.5px;top:225px;" width="10" height="7" viewBox="0 0 10 7"><path d="M1 6L5 1.500L9 6" fill="none" stroke="#444" stroke-width="1.600"/></svg><svg class="b" style="left:1684.5px;top:985px;" width="10" height="7" viewBox="0 0 10 7"><path d="M1 1L5 5.500L9 1" fill="none" stroke="#444" stroke-width="1.600"/></svg><div class="b" style="left:1682px;top:600px;width:16px;height:17px;background:#cdcdcd;"></div><div class="b" style="left:223px;top:997.5px;width:1476px;height:16.5px;background:#f0f0f0;"></div><svg class="b" style="left:224px;top:998.5px;" width="16" height="12" viewBox="0 0 16 12"><g fill="none" stroke="#222" stroke-width="1.100"><path d="M0.500 4C2 2.500 3.500 3 4.500 5C5.500 8 7 9.500 9.500 8.500L12.500 7C15.500 5.500 14.500 1.500 11.500 1.500C9.500 1.500 8.500 2.500 8.500 3.500"/><path d="M5 7.500C6 10.500 10 10.500 10.500 8"/></g></svg><svg class="b" style="left:248px;top:998.5px;" width="10" height="13" viewBox="0 0 10 13"><g fill="none" stroke="#2a6ab0" stroke-width="1.100"><circle cx="5" cy="5" r="3"/><path d="M3.500 8V10.500H6.500V8"/></g></svg><svg class="b" style="left:269px;top:1000px;" width="8" height="10" viewBox="0 0 8 10"><path d="M6.500 1L2 5L6.500 9" fill="none" stroke="#333" stroke-width="1.600"/></svg><svg class="b" style="left:1668px;top:1000px;" width="8" height="10" viewBox="0 0 8 10"><path d="M1.500 1L6 5L1.500 9" fill="none" stroke="#333" stroke-width="1.600"/></svg><div class="b" style="left:965px;top:998px;width:17px;height:16px;background:#cdcdcd;"></div><svg class="b" style="left:1685px;top:1001px;" width="10" height="10" viewBox="0 0 10 10"><g fill="#b0b0b0"><rect x="7" y="1" width="2" height="2"/><rect x="4" y="4" width="2" height="2"/><rect x="7" y="4" width="2" height="2"/><rect x="1" y="7" width="2" height="2"/><rect x="4" y="7" width="2" height="2"/><rect x="7" y="7" width="2" height="2"/></g></svg><div class="b" style="left:1699px;top:197px;width:4px;height:819px;background:#ececec;"></div><div class="b" style="left:1700.5px;top:197px;width:1.5px;height:819px;background:#c0c0c0;"></div>
<div class="b" style="left:1703px;top:197px;width:217px;height:820px;background:#f0f0f0;"></div><div class="b" style="left:1704px;top:314px;width:216px;height:674px;background:#ffffff;"></div><span class="t" style="left:1706px;top:198.5px;font-size:12px;line-height:18px;color:#333;letter-spacing:-0.169px;">Propriétés</span><svg class="b" style="left:1907px;top:202px;" width="11" height="11" viewBox="0 0 11 11"><path d="M1 1L10 10M10 1L1 10" stroke="#222" stroke-width="1.600"/></svg><div class="b" style="left:1704px;top:218px;width:216px;height:71px;background:#f0f0f0;border:1px solid #d4d4d4;box-sizing:border-box;"></div><div class="b" style="left:1707px;top:220px;width:66px;height:66px;background:#f2f2f2;border:1px solid #d0d0d0;box-sizing:border-box;"></div><svg class="b" style="left:1723px;top:238px;" width="34" height="29" viewBox="0 0 34 29"><g fill="none" stroke-linejoin="round"><path d="M2 2H24L32 9V27H2Z" fill="#e4e6e8" stroke="#3a3f46" stroke-width="2.200"/><path d="M24 2V9H32" stroke="#3a3f46" stroke-width="1.500" fill="#f4f4f4"/><path d="M6 22V9H20V22H15V14H11" stroke="#9aa2ac" stroke-width="2.200"/><rect x="6" y="17" width="4.500" height="4.500" stroke="#9aa2ac" stroke-width="1.800"/><path d="M27 16V22" stroke="#9aa2ac" stroke-width="1.800"/></g></svg><span class="t" style="left:1777px;top:237.0px;font-size:12px;line-height:18px;color:#333;letter-spacing:-0.193px;">Feuille</span><span class="t" style="left:1777px;top:252.5px;font-size:12px;line-height:18px;color:#333;letter-spacing:-0.272px;">Sheet</span><svg class="b" style="left:1910.0px;top:252.0px;" width="7" height="4" viewBox="0 0 7 4"><path d="M0 0H7L3.5 4Z" fill="#333"/></svg><div class="b" style="left:1704px;top:290px;width:98px;height:23px;background:#e5e5e5;border:1px solid #adadad;box-sizing:border-box;"></div><span class="t" style="left:1708px;top:292.5px;font-size:12px;line-height:18px;color:#111;letter-spacing:-0.288px;">Feuille: Plans</span><svg class="b" style="left:1788px;top:298px;" width="10" height="7" viewBox="0 0 10 7"><path d="M1 1L5 5.500L9 1" fill="none" stroke="#333" stroke-width="1.100"/></svg><svg class="b" style="left:1808px;top:292px;" width="17" height="17" viewBox="0 0 17 17"><g fill="#fff" stroke="#333" stroke-width="1.100"><rect x="0.500" y="0.500" width="6" height="6" rx="1"/><rect x="9" y="0.500" width="6" height="6" rx="1"/><rect x="0.500" y="8.500" width="6" height="6" rx="1"/><rect x="9" y="6.500" width="7" height="9.500" rx="1"/></g><rect x="10.500" y="8.500" width="4" height="2" fill="#2a6ab0"/><path d="M11 13H14M12.500 11.500V14.500" stroke="#2a6ab0" /></svg><span class="t" style="left:1829px;top:291.0px;font-size:12px;line-height:18px;color:#111;letter-spacing:0.102px;">Modifier le type</span><div class="b" style="left:1704px;top:314.5px;width:216px;height:17px;background:#dcdcdc;"></div><span class="t" style="left:1706px;top:314.0px;font-size:12px;line-height:18px;color:#111;letter-spacing:-0.269px;">Graphismes</span><svg class="b" style="left:1906px;top:317.5px;" width="9" height="11" viewBox="0 0 9 11"><path d="M1.500 5L4.500 1.500L7.500 5M1.500 10L4.500 6.500L7.500 10" fill="none" stroke="#111" stroke-width="1.400"/></svg><div class="b" style="left:1704px;top:368px;width:216px;height:17px;background:#dcdcdc;"></div><span class="t" style="left:1706px;top:367.5px;font-size:12px;line-height:18px;color:#111;letter-spacing:0.040px;">Données d'identification</span><svg class="b" style="left:1906px;top:371px;" width="9" height="11" viewBox="0 0 9 11"><path d="M1.500 5L4.500 1.500L7.500 5M1.500 10L4.500 6.500L7.500 10" fill="none" stroke="#111" stroke-width="1.400"/></svg><div class="b" style="left:1704px;top:710px;width:216px;height:17px;background:#dcdcdc;"></div><span class="t" style="left:1706px;top:709.5px;font-size:12px;line-height:18px;color:#111;letter-spacing:0.063px;">Autre</span><svg class="b" style="left:1906px;top:713px;" width="9" height="11" viewBox="0 0 9 11"><path d="M1.500 5L4.500 1.500L7.500 5M1.500 10L4.500 6.500L7.500 10" fill="none" stroke="#111" stroke-width="1.400"/></svg><span class="t" style="left:1712px;top:331.0px;font-size:12px;line-height:18px;color:#111;letter-spacing:-0.114px;">Remplacement...</span><div class="b" style="left:1704px;top:349px;width:216px;height:0px;border-top:1px dotted #8a8a8a;"></div><div class="b" style="left:1808px;top:333px;width:100px;height:15px;background:#e1e1e1;border:1px solid #9c9c9c;box-sizing:border-box;border-bottom:2px solid #8a8a8a;"></div><span class="t" style="left:1829px;top:331.0px;font-size:12px;line-height:18px;color:#111;letter-spacing:0.180px;">Modifier...</span><span class="t" style="left:1712px;top:349.0px;font-size:12px;line-height:18px;color:#6d6d6d;letter-spacing:-0.337px;">Echelle</span><span class="t" style="left:1809px;top:349.0px;font-size:12px;line-height:18px;color:#6d6d6d;"> 1 : 100</span><div class="b" style="left:1704px;top:367px;width:216px;height:0px;border-top:1px dotted #8a8a8a;"></div><span class="t" style="left:1712px;top:385.0px;font-size:12px;line-height:18px;color:#6d6d6d;letter-spacing:-0.306px;">Dépendance</span><span class="t" style="left:1809px;top:385.0px;font-size:12px;line-height:18px;color:#6d6d6d;letter-spacing:-0.067px;">Indépendant</span><div class="b" style="left:1704px;top:403px;width:216px;height:0px;border-top:1px dotted #8a8a8a;"></div><span class="t" style="left:1712px;top:403.0px;font-size:12px;line-height:18px;color:#6d6d6d;letter-spacing:-0.258px;">Référencement ...</span><div class="b" style="left:1704px;top:421px;width:216px;height:0px;border-top:1px dotted #8a8a8a;"></div><span class="t" style="left:1712px;top:421.0px;font-size:12px;line-height:18px;color:#6d6d6d;letter-spacing:-0.258px;">Référencement ...</span><div class="b" style="left:1704px;top:439px;width:216px;height:0px;border-top:1px dotted #8a8a8a;"></div><span class="t" style="left:1712px;top:439.0px;font-size:12px;line-height:18px;color:#6d6d6d;letter-spacing:-0.108px;">Révision actuell...</span><div class="b" style="left:1704px;top:457px;width:216px;height:0px;border-top:1px dotted #8a8a8a;"></div><div class="b" style="left:1810px;top:442px;width:13px;height:13px;background:#fff;border:1px solid #c4c4c4;box-sizing:border-box;"></div><span class="t" style="left:1712px;top:457.0px;font-size:12px;line-height:18px;color:#6d6d6d;letter-spacing:-0.108px;">Révision actuell...</span><div class="b" style="left:1704px;top:475px;width:216px;height:0px;border-top:1px dotted #8a8a8a;"></div><span class="t" style="left:1712px;top:475.0px;font-size:12px;line-height:18px;color:#6d6d6d;letter-spacing:-0.108px;">Révision actuell...</span><div class="b" style="left:1704px;top:493px;width:216px;height:0px;border-top:1px dotted #8a8a8a;"></div><span class="t" style="left:1712px;top:493.0px;font-size:12px;line-height:18px;color:#6d6d6d;letter-spacing:-0.143px;">Date de révision...</span><span class="t" style="left:1809px;top:493.0px;font-size:12px;line-height:18px;color:#6d6d6d;letter-spacing:-0.206px;">24/04/2018</span><div class="b" style="left:1704px;top:511px;width:216px;height:0px;border-top:1px dotted #8a8a8a;"></div><span class="t" style="left:1712px;top:511.0px;font-size:12px;line-height:18px;color:#6d6d6d;letter-spacing:-0.090px;">Description de l...</span><span class="t" style="left:1809px;top:511.0px;font-size:12px;line-height:18px;color:#6d6d6d;letter-spacing:-0.186px;">modif RDC</span><div class="b" style="left:1704px;top:529px;width:216px;height:0px;border-top:1px dotted #8a8a8a;"></div><span class="t" style="left:1712px;top:529.0px;font-size:12px;line-height:18px;color:#6d6d6d;letter-spacing:-0.160px;">Révision actuelle</span><span class="t" style="left:1809px;top:529.0px;font-size:12px;line-height:18px;color:#6d6d6d;">A</span><div class="b" style="left:1704px;top:547px;width:216px;height:0px;border-top:1px dotted #8a8a8a;"></div><span class="t" style="left:1712px;top:547.0px;font-size:12px;line-height:18px;color:#111;">Approuvé par</span><span class="t" style="left:1809px;top:547.0px;font-size:12px;line-height:18px;color:#111;letter-spacing:0.038px;">Approver</span><div class="b" style="left:1704px;top:565px;width:216px;height:0px;border-top:1px dotted #8a8a8a;"></div><span class="t" style="left:1712px;top:565.0px;font-size:12px;line-height:18px;color:#111;letter-spacing:-0.041px;">Conçu par</span><span class="t" style="left:1809px;top:565.0px;font-size:12px;line-height:18px;color:#111;letter-spacing:-0.253px;">Designer</span><div class="b" style="left:1704px;top:583px;width:216px;height:0px;border-top:1px dotted #8a8a8a;"></div><span class="t" style="left:1712px;top:583.0px;font-size:12px;line-height:18px;color:#111;letter-spacing:-0.154px;">Vérifié par</span><span class="t" style="left:1809px;top:583.0px;font-size:12px;line-height:18px;color:#111;letter-spacing:-0.780px;">JLH</span><div class="b" style="left:1704px;top:601px;width:216px;height:0px;border-top:1px dotted #8a8a8a;"></div><span class="t" style="left:1712px;top:601.0px;font-size:12px;line-height:18px;color:#111;letter-spacing:-0.367px;">Dessiné par</span><span class="t" style="left:1809px;top:601.0px;font-size:12px;line-height:18px;color:#111;letter-spacing:-1.000px;">SM</span><div class="b" style="left:1704px;top:619px;width:216px;height:0px;border-top:1px dotted #8a8a8a;"></div><span class="t" style="left:1712px;top:619.0px;font-size:12px;line-height:18px;color:#111;letter-spacing:-0.042px;">Numéro de la f...</span><span class="t" style="left:1809px;top:619.0px;font-size:12px;line-height:18px;color:#111;letter-spacing:-0.507px;">A102</span><div class="b" style="left:1704px;top:637px;width:216px;height:0px;border-top:1px dotted #8a8a8a;"></div><span class="t" style="left:1712px;top:637.0px;font-size:12px;line-height:18px;color:#111;letter-spacing:0.036px;">Nom de la feuille</span><span class="t" style="left:1809px;top:637.0px;font-size:12px;line-height:18px;color:#111;letter-spacing:-0.404px;">Plans</span><div class="b" style="left:1704px;top:655px;width:216px;height:0px;border-top:1px dotted #8a8a8a;"></div><span class="t" style="left:1712px;top:655.0px;font-size:12px;line-height:18px;color:#111;letter-spacing:-0.143px;">Date de fin de l...</span><span class="t" style="left:1809px;top:655.0px;font-size:12px;line-height:18px;color:#111;letter-spacing:-0.089px;">07/24/12</span><div class="b" style="left:1704px;top:673px;width:216px;height:0px;border-top:1px dotted #8a8a8a;"></div><span class="t" style="left:1712px;top:673.0px;font-size:12px;line-height:18px;color:#111;letter-spacing:-0.236px;">Figure dans la li...</span><div class="b" style="left:1704px;top:691px;width:216px;height:0px;border-top:1px dotted #8a8a8a;"></div><div class="b" style="left:1810px;top:676px;width:13px;height:13px;background:#fff;border:1px solid #333;box-sizing:border-box;"></div><svg class="b" style="left:1811px;top:677px;" width="11" height="11" viewBox="0 0 11 11"><path d="M2 5.500L4.500 8.500L9.500 2" fill="none" stroke="#111" stroke-width="1.300"/></svg><span class="t" style="left:1712px;top:691.0px;font-size:12px;line-height:18px;color:#111;letter-spacing:-0.283px;">Révisions sur fe...</span><div class="b" style="left:1704px;top:709px;width:216px;height:0px;border-top:1px dotted #8a8a8a;"></div><div class="b" style="left:1808px;top:693px;width:100px;height:15px;background:#e1e1e1;border:1px solid #9c9c9c;box-sizing:border-box;border-bottom:2px solid #8a8a8a;"></div><span class="t" style="left:1829px;top:691.0px;font-size:12px;line-height:18px;color:#111;letter-spacing:0.180px;">Modifier...</span><span class="t" style="left:1712px;top:727.0px;font-size:12px;line-height:18px;color:#6d6d6d;">Chemin du fich...</span><span class="t" style="left:1809px;top:727.0px;font-size:12px;line-height:18px;color:#6d6d6d;letter-spacing:-0.212px;">C:\Program Files...</span><div class="b" style="left:1704px;top:745px;width:216px;height:0px;border-top:1px dotted #8a8a8a;"></div><span class="t" style="left:1712px;top:745.0px;font-size:12px;line-height:18px;color:#111;letter-spacing:-0.188px;">Quadrillage de ...</span><span class="t" style="left:1809px;top:745.0px;font-size:12px;line-height:18px;color:#111;letter-spacing:0.137px;">&lt;Aucun&gt;</span><div class="b" style="left:1704px;top:763px;width:216px;height:0px;border-top:1px dotted #8a8a8a;"></div><div class="b" style="left:1806px;top:331px;width:0px;height:36px;border-left:1px dotted #8a8a8a;"></div><div class="b" style="left:1907px;top:331px;width:0px;height:36px;border-left:1px dotted #8a8a8a;"></div><div class="b" style="left:1919px;top:331px;width:0px;height:36px;border-left:1px dotted #8a8a8a;"></div><div class="b" style="left:1806px;top:385px;width:0px;height:324px;border-left:1px dotted #8a8a8a;"></div><div class="b" style="left:1907px;top:385px;width:0px;height:324px;border-left:1px dotted #8a8a8a;"></div><div class="b" style="left:1919px;top:385px;width:0px;height:324px;border-left:1px dotted #8a8a8a;"></div><div class="b" style="left:1806px;top:727px;width:0px;height:36px;border-left:1px dotted #8a8a8a;"></div><div class="b" style="left:1907px;top:727px;width:0px;height:36px;border-left:1px dotted #8a8a8a;"></div><div class="b" style="left:1919px;top:727px;width:0px;height:36px;border-left:1px dotted #8a8a8a;"></div><div class="b" style="left:1704px;top:367px;width:216px;height:0px;border-top:1px dotted #8a8a8a;"></div><span class="t" style="left:1706px;top:992.0px;font-size:12px;line-height:18px;color:#1560b8;letter-spacing:-0.126px;text-decoration:underline;">Aide des propriétés</span><div class="b" style="left:1845px;top:991px;width:73px;height:21px;background:#d0d0d0;border:1px solid #bdbdbd;box-sizing:border-box;"></div><span class="t" style="left:1855px;top:992.5px;font-size:12px;line-height:18px;color:#8a8a8a;letter-spacing:0.144px;">Appliquer</span>
<div class="b" style="left:0px;top:1016px;width:1920px;height:24px;background:#cccccc;"></div><span class="t" style="left:1px;top:1020.0px;font-size:12px;line-height:18px;color:#111;letter-spacing:-0.238px;">Fenêtres  : Fenêtre : Title w Line</span><svg class="b" style="left:832px;top:1019px;" width="18" height="19" viewBox="0 0 18 19"><g fill="#9c9c9c"><rect x="2" y="8" width="5" height="10" rx="1"/><rect x="11" y="10" width="5" height="8" rx="1"/><path d="M7 11L11 12.500V15.500L7 14Z"/><circle cx="8.500" cy="4" r="2.300"/><path d="M5.500 7.500C5.500 5.500 11.500 5.500 11.500 7.500V11H5.500Z"/></g><path d="M4 2.500L2.500 6M13 5L14.500 8" stroke="#9c9c9c" stroke-width="1.500"/></svg><div class="b" style="left:858px;top:1020px;width:204px;height:18px;background:#fff;"></div><svg class="b" style="left:1049px;top:1026px;" width="10" height="7" viewBox="0 0 10 7"><path d="M1 1L5 5.500L9 1" fill="none" stroke="#777" stroke-width="1"/></svg><svg class="b" style="left:1070px;top:1019px;" width="18" height="18" viewBox="0 0 18 18"><g fill="#a4a4a4"><path d="M5 2.500H15C16 2.500 16 6.500 15 6.500H5C4 6.500 4 2.500 5 2.500Z"/><path d="M9 6.500H12L10 10H8Z"/><path d="M5.500 10H9L7 17H3.500Z"/></g></svg><span class="t" style="left:1090.5px;top:1020.0px;font-size:12px;line-height:18px;color:#222;">:0</span><div class="b" style="left:827.5px;top:1018px;width:1px;height:21px;background:#b8b8b8;"></div><svg class="b" style="left:1123px;top:1020px;" width="17" height="16" viewBox="0 0 17 16"><g fill="none" stroke="#222" stroke-width="1.200"><rect x="1" y="1.500" width="15" height="13"/><path d="M1 4.500H16" stroke-width="2"/><path d="M3.500 8H6M8 8H14M3.500 11.500H6M8 11.500H14"/></g></svg><svg class="b" style="left:1150px;top:1020px;" width="17" height="17" viewBox="0 0 17 17"><path d="M4 1H16V15H4V11H8V5H4Z" fill="#a8a8a8"/><path d="M1 8H8M5.500 5.500L8 8L5.500 10.500" stroke="#a8a8a8" stroke-width="1.300" fill="none"/><path d="M1 12.500H6M4.500 10.500L6.500 12.500L4.500 14.500" stroke="#a8a8a8" stroke-width="1" fill="none"/></svg><div class="b" style="left:1173.5px;top:1020px;width:205px;height:18px;background:#fff;"></div><span class="t" style="left:1177px;top:1019.5px;font-size:12px;line-height:18px;color:#6a6a6a;letter-spacing:-0.171px;">Modèle de base</span><svg class="b" style="left:1365px;top:1026px;" width="10" height="7" viewBox="0 0 10 7"><path d="M1 1L5 5.500L9 1" fill="none" stroke="#777" stroke-width="1"/></svg><svg class="b" style="left:1675px;top:1020px;" width="20" height="18" viewBox="0 0 20 18"><g fill="none" stroke="#d8a810" stroke-width="2.200"><rect x="2" y="2.500" width="8" height="5.500" rx="2.700"/><rect x="8" y="2.500" width="8" height="5.500" rx="2.700"/></g><path d="M9 6V15L11.500 12.500L13 16L14.500 15.500L13 12H16Z" fill="#fff" stroke="#111" stroke-width=".900"/></svg><svg class="b" style="left:1701px;top:1020px;" width="20" height="18" viewBox="0 0 20 18"><path d="M1 13L8 5H16L9 13Z M1 15H9" fill="none" stroke="#2a5a9a" stroke-width="1.200"/><path d="M12 1L17 6M17 1L12 6" stroke="#d02020" stroke-width="1.800"/><path d="M9 8V16L11 14L12.500 17L14 16.500L12.500 13.500H15Z" fill="#fff" stroke="#111" stroke-width=".800"/></svg><svg class="b" style="left:1727px;top:1020px;" width="20" height="18" viewBox="0 0 20 18"><path d="M3 2H11V7H3ZM2 9H12M7 9V16" fill="#f0a080" stroke="#c04010" stroke-width="1.200"/><path d="M10 7V16L12 14L13.500 17L15 16.500L13.500 13.500H16Z" fill="#fff" stroke="#111" stroke-width=".800"/></svg><svg class="b" style="left:1753px;top:1020px;" width="20" height="18" viewBox="0 0 20 18"><path d="M2 4L8 2V14L2 16Z" fill="none" stroke="#2a5a9a" stroke-width="1.300"/><path d="M11 1L16 6M16 1L11 6" stroke="#d02020" stroke-width="1.800"/><path d="M9 8V16L11 14L12.500 17L14 16.500L12.500 13.500H15Z" fill="#fff" stroke="#111" stroke-width=".800"/></svg><svg class="b" style="left:1779px;top:1020px;" width="20" height="18" viewBox="0 0 20 18"><path d="M6 1V11M1 6H11M6 1L4.500 3M6 1L7.500 3M1 6L3 4.500M1 6L3 7.500M11 6L9 4.500M6 11L4.500 9M6 11L7.500 9" stroke="#111" fill="none" stroke-width="1"/><path d="M9 7V16L11.500 13.500L13 17L14.500 16.500L13 13H16Z" fill="#fff" stroke="#111" stroke-width=".900"/></svg><svg class="b" style="left:1806px;top:1021px;" width="14" height="14" viewBox="0 0 14 14"><circle cx="7" cy="7" r="4.500" fill="none" stroke="#b4b4b4" stroke-width="2.500" stroke-dasharray="2 1.500"/></svg><svg class="b" style="left:1828px;top:1021px;" width="16" height="15" viewBox="0 0 16 15"><path d="M1 1.500H15L9.500 8V14L6.500 12V8Z" fill="#e8e8e8" stroke="#333" stroke-width="1.200"/></svg><span class="t" style="left:1844px;top:1019.5px;font-size:12px;line-height:18px;color:#222;">:0</span>
<div class="b" style="left:0px;top:0px;width:1920px;height:49px;background:#cccccc;"></div><div class="b" style="left:0px;top:49px;width:1920px;height:95px;background:#eeeeee;"></div><div class="b" style="left:0px;top:144px;width:1920px;height:25px;background:#cccccc;"></div><div class="b" style="left:0px;top:169px;width:1920px;height:26px;background:#eeeeee;"></div><div class="b" style="left:0px;top:195px;width:1920px;height:2px;background:#cccccc;"></div><svg class="b" style="left:4px;top:2px;" width="20" height="20" viewBox="0 0 20 20"><defs><linearGradient id="rg" x1="0" y1="0" x2="0.300" y2="1"><stop offset="0" stop-color="#2f78c4"/><stop offset="1" stop-color="#1b4a8e"/></linearGradient><linearGradient id="rg2" x1="0" y1="0" x2="0.600" y2="1"><stop offset="0" stop-color="#2a6ab4"/><stop offset="1" stop-color="#7cc4ec"/></linearGradient></defs>
    <path d="M2 0.600H9C13.200 0.600 15 2.700 15 5.600S13 10.800 9 10.800H6.200L5.600 18H2Z M6.200 3.900V7.400H8.600C10.200 7.400 10.900 6.700 10.900 5.650S10.200 3.900 8.600 3.900Z" fill="url(#rg)" fill-rule="evenodd"/><path d="M4.500 18L6.200 10L10.200 9.600L16.600 18H12.400L8.400 12L7.600 18Z" fill="url(#rg2)"/></svg><span class="t" style="left:668px;top:1.0px;font-size:12px;line-height:18px;color:#222;letter-spacing:-0.117px;">Autodesk Revit 2019 - Version interdite à la vente - rac_basic_sample_project.rvt - Feuille: A102 - Plans</span><svg class="b" style="left:1380px;top:6px;" width="6" height="9" viewBox="0 0 6 9"><path d="M1 0.5L5 4.5L1 8.5Z" fill="#333"/></svg><div class="b" style="left:1391px;top:2px;width:180px;height:21px;background:#fff;border:1px solid #1a1a1a;box-sizing:border-box;"></div><span class="t" style="left:1394px;top:3.0px;font-size:12px;line-height:18px;color:#6a6a6a;font-style:italic;letter-spacing:-0.693px;">Entrez mot-clé ou expression</span><svg class="b" style="left:1574px;top:3px;" width="18" height="18" viewBox="0 0 18 18"><g fill="#fff" stroke="#222" stroke-width="1.400"><rect x="1.500" y="7" width="5.500" height="9" rx="1.500"/><rect x="11" y="7" width="5.500" height="9" rx="1.500"/><path d="M3 7V3.5h3V7M12 7V3.5h3V7M7 9h4"/></g></svg><svg class="b" style="left:1598px;top:3px;" width="18" height="18" viewBox="0 0 18 18"><g fill="none" stroke="#222" stroke-width="1.3"><path d="M3 5c0 5 4 9 9 9z"/><path d="M7.5 9.5L13 3M11 3h2.5v2.5M6 14l-2 3h8l-2-3"/></g></svg><svg class="b" style="left:1620px;top:2px;" width="20" height="20" viewBox="0 0 20 20"><path d="M10 2.5l2.3 5 5.4.6-4 3.7 1.1 5.4L10 14.5l-4.8 2.7 1.1-5.4-4-3.7 5.4-.6z" fill="none" stroke="#222" stroke-width="1.4" stroke-linejoin="round"/></svg><svg class="b" style="left:1646px;top:2px;" width="18" height="20" viewBox="0 0 18 20"><path d="M9 1.5c2.3 0 3.7 1.8 3.7 4.5S11 11 9 11 5.3 8.700 5.300 6 6.700 1.500 9 1.500z" fill="#5a82d8" stroke="#2a4f9a" stroke-width="1.200"/><path d="M1 18.500c.5-4 3-6 5.500-6.500L9 14l2.500-2c2.500.5 5 2.500 5.500 6.500z" fill="#4a72c4" stroke="#2a4f9a" stroke-width="1.200"/></svg><span class="t" style="left:1668px;top:3.5px;font-size:12.5px;line-height:18px;color:#333;letter-spacing:-0.179px;">julien.frouin@...</span><svg class="b" style="left:1754.0px;top:10.5px;" width="6" height="3" viewBox="0 0 6 3"><path d="M0 0H6L3.0 3Z" fill="#333"/></svg><svg class="b" style="left:1767px;top:3px;" width="20" height="18" viewBox="0 0 20 18"><g fill="none" stroke="#2a5a8a" stroke-width="1.400"><path d="M1 2.500h3l2.500 9h8.500l2-6.500H5"/><circle cx="8" cy="14.500" r="1.300"/><circle cx="14" cy="14.500" r="1.300"/></g></svg><div class="b" style="left:1794px;top:4px;width:1px;height:17px;background:#b8b8b8;"></div><svg class="b" style="left:1803px;top:3px;" width="18" height="18" viewBox="0 0 18 18"><circle cx="9" cy="9" r="7.500" fill="#fff" stroke="#1a1a1a" stroke-width="1.300"/></svg><span class="t" style="left:1808.5px;top:3.5px;font-size:13px;line-height:18px;color:#1a3f8f;font-weight:bold;">?</span><svg class="b" style="left:1827.0px;top:10.5px;" width="6" height="3" viewBox="0 0 6 3"><path d="M0 0H6L3.0 3Z" fill="#333"/></svg><div class="b" style="left:1854px;top:15px;width:9px;height:2px;background:#1a1a1a;"></div><svg class="b" style="left:1877px;top:6px;" width="13" height="13" viewBox="0 0 13 13"><g fill="none" stroke="#1a1a1a" stroke-width="1.500"><path d="M3.500 3.500V1h8.500v8H9.500"/><rect x="1" y="4" width="8.500" height="7.500" /><path d="M1 5h8.500" stroke-width="2"/></g></svg><svg class="b" style="left:1902px;top:5px;" width="12" height="12" viewBox="0 0 12 12"><path d="M1 1L11 11M11 1L1 11" stroke="#1a1a1a" stroke-width="1.800"/></svg><svg class="b" style="left:1894px;top:34px;" width="16" height="10" viewBox="0 0 16 10"><rect x="0.500" y="0.500" width="15" height="8.500" rx="3" fill="#f4f4f4" stroke="#333"/><path d="M4.500 6.500H11.500L8 3Z" fill="#333"/></svg><svg class="b" style="left:1912.0px;top:38.5px;" width="6" height="3" viewBox="0 0 6 3"><path d="M0 0H6L3.0 3Z" fill="#333"/></svg><div class="b" style="left:0px;top:28px;width:53px;height:21px;background:#2a7ab8;"></div><div class="b" style="left:0px;top:28px;width:53px;height:1px;background:#b8d8ee;"></div><div class="b" style="left:380px;top:29px;width:61px;height:20px;background:#eeeeee;"></div><span class="t" style="left:9px;top:29.5px;font-size:12px;line-height:18px;color:#fff;letter-spacing:-0.144px;">Fichier</span><span class="t" style="left:65px;top:29.5px;font-size:12px;line-height:18px;color:#262626;letter-spacing:0.081px;">Architecture</span><span class="t" style="left:150px;top:29.5px;font-size:12px;line-height:18px;color:#262626;letter-spacing:-0.076px;">Structure</span><span class="t" style="left:218px;top:29.5px;font-size:12px;line-height:18px;color:#262626;letter-spacing:-0.068px;">Acier</span><span class="t" style="left:265px;top:29.5px;font-size:12px;line-height:18px;color:#262626;letter-spacing:-0.460px;">Systèmes</span><span class="t" style="left:334px;top:29.5px;font-size:12px;line-height:18px;color:#262626;letter-spacing:-0.336px;">Insérer</span><span class="t" style="left:389px;top:29.5px;font-size:12px;line-height:18px;color:#262626;letter-spacing:0.138px;">Annoter</span><span class="t" style="left:452px;top:29.5px;font-size:12px;line-height:18px;color:#262626;letter-spacing:-0.211px;">Analyser</span><span class="t" style="left:517px;top:29.5px;font-size:12px;line-height:18px;color:#262626;letter-spacing:-0.098px;">Volume et site</span><span class="t" style="left:611px;top:29.5px;font-size:12px;line-height:18px;color:#262626;letter-spacing:-0.036px;">Collaborer</span><span class="t" style="left:686px;top:29.5px;font-size:12px;line-height:18px;color:#262626;letter-spacing:-0.302px;">Vue</span><span class="t" style="left:726px;top:29.5px;font-size:12px;line-height:18px;color:#262626;letter-spacing:-0.535px;">Gérer</span><span class="t" style="left:774px;top:29.5px;font-size:12px;line-height:18px;color:#262626;letter-spacing:0.088px;">Compléments</span><span class="t" style="left:869px;top:29.5px;font-size:12px;line-height:18px;color:#262626;letter-spacing:0.290px;">Modifier</span><div class="b" style="left:90px;top:51px;width:1px;height:91px;background:#dcdcdc;"></div><div class="b" style="left:506px;top:51px;width:1px;height:91px;background:#dcdcdc;"></div><div class="b" style="left:753px;top:51px;width:1px;height:91px;background:#dcdcdc;"></div><div class="b" style="left:915px;top:51px;width:1px;height:91px;background:#dcdcdc;"></div><div class="b" style="left:1469px;top:51px;width:1px;height:72px;background:#dcdcdc;"></div><div class="b" style="left:1608px;top:51px;width:1px;height:91px;background:#dcdcdc;"></div><div class="b" style="left:1782px;top:51px;width:1px;height:91px;background:#dcdcdc;"></div><span class="t" style="left:6px;top:125.0px;font-size:12px;line-height:18px;color:#1e1e1e;letter-spacing:-0.143px;">Sélectionner</span><svg class="b" style="left:76.5px;top:133.0px;" width="7" height="4" viewBox="0 0 7 4"><path d="M0 0H7L3.5 4Z" fill="#333"/></svg><span class="t" style="left:279px;top:125.0px;font-size:12px;line-height:18px;color:#1e1e1e;letter-spacing:-0.087px;">Cote</span><svg class="b" style="left:310.5px;top:133.0px;" width="7" height="4" viewBox="0 0 7 4"><path d="M0 0H7L3.5 4Z" fill="#333"/></svg><span class="t" style="left:614px;top:125.0px;font-size:12px;line-height:18px;color:#1e1e1e;letter-spacing:0.053px;">Détail</span><span class="t" style="left:815px;top:125.0px;font-size:12px;line-height:18px;color:#1e1e1e;letter-spacing:-0.136px;">Texte</span><svg class="b" style="left:903px;top:131px;" width="7" height="7" viewBox="0 0 7 7"><path d="M1 1L5.500 5.500M5.500 2V5.500H2" stroke="#333" fill="none"/></svg><span class="t" style="left:1231px;top:125.0px;font-size:12px;line-height:18px;color:#1e1e1e;letter-spacing:-0.041px;">Etiquette</span><svg class="b" style="left:1284.5px;top:133.0px;" width="7" height="4" viewBox="0 0 7 4"><path d="M0 0H7L3.5 4Z" fill="#333"/></svg><span class="t" style="left:1659px;top:125.0px;font-size:12px;line-height:18px;color:#1e1e1e;letter-spacing:0.408px;">Motif/couleur</span><span class="t" style="left:1813px;top:125.0px;font-size:12px;line-height:18px;color:#1e1e1e;letter-spacing:-0.098px;">Symbole</span><div class="b" style="left:20px;top:52px;width:51px;height:72px;background:linear-gradient(#c4ddf6,#b2d3f2);border:1px solid #2f7fc2;box-sizing:border-box;"></div><svg class="b" style="left:37px;top:60px;" width="14" height="21" viewBox="0 0 14 21"><path d="M2 1.500V16L5.500 12.800L8 18.500L10.500 17.300L8 11.800H12.500Z" fill="#fff" stroke="#1a1a1a" stroke-width="1.100" stroke-linejoin="round"/></svg><span class="t" style="left:23px;top:89.0px;font-size:12px;line-height:18px;color:#1e1e1e;letter-spacing:0.290px;">Modifier</span><svg class="b" style="left:100px;top:54px;" width="32" height="32" viewBox="0 0 32 32"><g stroke="#2a2f3a" stroke-width="1.200" fill="none"><path d="M2 23L10 31M22 1L30 9M8 25L24 7"/></g><path d="M6.500 26.500L8 21L12 25Z M25.500 5.500L20 7L24 11Z" fill="#2a2f3a"/></svg><span class="t" style="left:96px;top:89.0px;font-size:12px;line-height:18px;color:#1e1e1e;">Alignée</span><svg class="b" style="left:146px;top:54px;" width="32" height="32" viewBox="0 0 32 32"><g stroke="#2a2f3a" stroke-width="1.200" fill="none"><path d="M1.500 2V30M30.500 2V30M2 9.500H30"/></g><path d="M2 9.500L6 7.500V11.500Z M30 9.500L26 7.500V11.500Z" fill="#2a2f3a"/></svg><span class="t" style="left:142px;top:89.0px;font-size:12px;line-height:18px;color:#1e1e1e;letter-spacing:-0.212px;">Linéaire</span><svg class="b" style="left:199px;top:54px;" width="32" height="32" viewBox="0 0 32 32"><g stroke="#2a2f3a" stroke-width="1.200" fill="none"><path d="M1 30.500H31M1 21.500L21 2M19.500 6.500C25 12 27.500 20 27.700 28"/></g><path d="M18 5L23 6.500L20 9.500Z M27.700 30L25.500 25.500H30Z" fill="#2a2f3a"/></svg><span class="t" style="left:189px;top:89.0px;font-size:12px;line-height:18px;color:#1e1e1e;letter-spacing:0.033px;">Angulaire</span><svg class="b" style="left:248px;top:56px;" width="16" height="16" viewBox="0 0 16 16"><g stroke="#2a2f3a" fill="none" stroke-width="1.200"><path d="M1.500 14C1.500 6 6 2 13 1.500"/><path d="M5 4L13.500 12.500M11.500 12.500H15.500M13.500 10.500V14.500"/></g><path d="M4 3L8.500 4.500L5.500 7.500Z" fill="#2a2f3a"/></svg><span class="t" style="left:269px;top:55.0px;font-size:12px;line-height:18px;color:#262626;letter-spacing:-0.385px;">Radiale</span><svg class="b" style="left:248px;top:80px;" width="16" height="16" viewBox="0 0 16 16"><g stroke="#2a2f3a" fill="#f6f6f6" stroke-width="1"><circle cx="8" cy="8" r="7.200"/><path d="M3 3L13 13" stroke-width="1.100"/></g><path d="M2.500 2.500L7 3.500L3.500 7Z M13.500 13.500L9 12.500L12.500 9Z" fill="#2a2f3a"/></svg><span class="t" style="left:269px;top:79.0px;font-size:12px;line-height:18px;color:#262626;letter-spacing:-0.085px;">Diamètre</span><svg class="b" style="left:248px;top:104px;" width="16" height="16" viewBox="0 0 16 16"><g stroke="#2a2f3a" fill="none" stroke-width="1.200"><path d="M1.500 14C1.500 7 6 2.500 14 1.500"/><path d="M5.500 14C6 9 9 6.500 14 6"/><rect x="0.500" y="13" width="2.500" height="2.500" fill="#fff"/><rect x="13" y="0.500" width="2.500" height="2.500" fill="#fff"/></g></svg><span class="t" style="left:269px;top:103.0px;font-size:12px;line-height:18px;color:#262626;letter-spacing:-0.068px;">Longueur  d'arc</span><svg class="b" style="left:362px;top:56px;" width="16" height="16" viewBox="0 0 16 16"><g stroke="#b4b4b4" fill="none" stroke-width="1.100"><path d="M0 11L3 8H16M10.500 3V13"/><circle cx="10.500" cy="8" r="3.800"/></g><path d="M10.500 4.200A3.800 3.800 0 0 1 14.300 8H10.500Z M10.500 11.800A3.800 3.800 0 0 1 6.700 8H10.500Z" fill="#b4b4b4"/></svg><span class="t" style="left:383px;top:55.0px;font-size:12px;line-height:18px;color:#b4b4b4;letter-spacing:-0.060px;">Cote  d'élévation</span><svg class="b" style="left:362px;top:80px;" width="16" height="16" viewBox="0 0 16 16"><g stroke="#b4b4b4" fill="none" stroke-width="1.100"><path d="M0 11L3 8H16M10.500 3V13"/><circle cx="10.500" cy="8" r="3.800"/></g></svg><span class="t" style="left:383px;top:79.0px;font-size:12px;line-height:18px;color:#b4b4b4;letter-spacing:-0.104px;">Cote  de coordonnées</span><svg class="b" style="left:362px;top:104px;" width="16" height="16" viewBox="0 0 16 16"><g stroke="#d0d0d0" fill="none" stroke-width="1"><path d="M1 3.500H13V9.500M1 4.500L14 13" /></g></svg><span class="t" style="left:383px;top:103.0px;font-size:12px;line-height:18px;color:#b4b4b4;">Cote  d'inclinaison</span><svg class="b" style="left:514px;top:56px;" width="16" height="16" viewBox="0 0 16 16"><g stroke="#2a2f3a" fill="none" stroke-width="1.300"><rect x="0.700" y="0.700" width="14.600" height="14.600" rx="1.500"/><path d="M4.500 3.500V12.500M4.500 12.500H7M9 3.500C9 8 12 8 12 12.500"/><circle cx="4.500" cy="3.500" r="1.200" fill="#fff"/><circle cx="4.500" cy="12.500" r="1.200" fill="#fff"/><circle cx="9" cy="3.500" r="1.200" fill="#fff"/><circle cx="12" cy="12.500" r="1.200" fill="#fff"/></g></svg><span class="t" style="left:535px;top:55.0px;font-size:12px;line-height:18px;color:#262626;letter-spacing:-0.071px;">Ligne de détail</span><svg class="b" style="left:514px;top:80px;" width="16" height="16" viewBox="0 0 16 16"><g stroke="#b4b4b4" fill="none" stroke-width="1.100"><rect x="2.500" y="2.500" width="11" height="11"/><path d="M0 2.500H16M0 13.500H16M2.500 0V16M13.500 0V16M3 7L7 3M3 11L11 3M5 13L13 5M9 13L13 9"/></g></svg><span class="t" style="left:535px;top:79.0px;font-size:12px;line-height:18px;color:#b4b4b4;letter-spacing:0.162px;">Zone</span><svg class="b" style="left:569.0px;top:87.5px;" width="6" height="3" viewBox="0 0 6 3"><path d="M0 0H6L3.0 3Z" fill="#999"/></svg><svg class="b" style="left:514px;top:104px;" width="16" height="16" viewBox="0 0 16 16"><g stroke="#b4b4b4" fill="#e4e4e4" stroke-width="1.100"><path d="M1 1H7V8H1Z M9 1H15V15H1V10H9Z"/></g></svg><span class="t" style="left:535px;top:103.0px;font-size:12px;line-height:18px;color:#b4b4b4;letter-spacing:0.070px;">Composant</span><svg class="b" style="left:604.0px;top:111.5px;" width="6" height="3" viewBox="0 0 6 3"><path d="M0 0H6L3.0 3Z" fill="#999"/></svg><svg class="b" style="left:621px;top:56px;" width="16" height="16" viewBox="0 0 16 16"><path d="M4 3C5.500 .500 9 .500 10 2.500C13 1 16 3.500 14 6.500C16.500 9 14 12.500 11.500 11.500C10.500 15 6.500 15 5.500 12.500C2.500 14 0 10.500 2 8.500C-.500 6.500 1 3 4 3Z" fill="#f8f8f8" stroke="#4a4f58" stroke-width="1"/></svg><span class="t" style="left:643px;top:55.0px;font-size:12px;line-height:18px;color:#262626;letter-spacing:-0.102px;">Nuage de révision</span><svg class="b" style="left:621px;top:80px;" width="16" height="16" viewBox="0 0 16 16"><g stroke="#2a2f3a" fill="none" stroke-width="1.300"><path d="M4.500 1H1V15H4.500M11.500 1H15V3M15 13V15H11.500"/></g></svg><span class="t" style="left:643px;top:79.0px;font-size:12px;line-height:18px;color:#262626;letter-spacing:-0.161px;">Groupe de détails</span><svg class="b" style="left:740.0px;top:87.5px;" width="6" height="3" viewBox="0 0 6 3"><path d="M0 0H6L3.0 3Z" fill="#333"/></svg><span class="t" style="left:626.5px;top:80.0px;font-size:11px;line-height:18px;color:#2a2f3a;font-weight:bold;">A</span><svg class="b" style="left:621px;top:104px;" width="16" height="16" viewBox="0 0 16 16"><g stroke="#b4b4b4" fill="none" stroke-width="1.100"><path d="M2 1C3 4 13 3.500 13 6C13 8.500 3 8 3 10.500C3 13 12 12.500 14 15.500"/><path d="M14 1C13 4 3 3.500 3 6C3 8.500 13 8 13 10.500C13 13 4 12.500 2 15.500"/></g></svg><span class="t" style="left:643px;top:103.0px;font-size:12px;line-height:18px;color:#b4b4b4;letter-spacing:0.034px;">Isolation</span><span class="t" style="left:761.5px;top:54.5px;font-size:19px;line-height:20px;color:#3a3a3a;font-weight:bold;">A</span><span class="t" style="left:782px;top:55.0px;font-size:12px;line-height:18px;color:#1e1e1e;letter-spacing:-0.336px;">Texte</span><span class="t" style="left:761px;top:79.5px;font-size:7px;line-height:8px;color:#2a2f3a;font-weight:bold;letter-spacing:-0.055px;">ABC</span><svg class="b" style="left:762px;top:87px;" width="12" height="9" viewBox="0 0 12 9"><path d="M1 4.500L4.500 8L11 1" stroke="#2e9a2e" stroke-width="2.200" fill="none"/></svg><span class="t" style="left:782px;top:79.0px;font-size:12px;line-height:18px;color:#1e1e1e;letter-spacing:-0.015px;">Vérifier  l'orthographe</span><span class="t" style="left:769.5px;top:103.0px;font-size:6.5px;line-height:8px;color:#222;font-weight:bold;">A</span><span class="t" style="left:774px;top:103.0px;font-size:6.5px;line-height:8px;color:#3a8ad8;font-weight:bold;">C</span><span class="t" style="left:761px;top:110.0px;font-size:6.5px;line-height:8px;color:#222;font-weight:bold;">A</span><span class="t" style="left:765.3px;top:110.0px;font-size:6.5px;line-height:8px;color:#3a8ad8;font-weight:bold;">B</span><svg class="b" style="left:761px;top:103px;" width="8" height="5" viewBox="0 0 8 5"><path d="M1 4.500V2.500H6M4.500 .800L6.500 2.500L4.500 4.200" stroke="#111" fill="none" stroke-width="1"/></svg><svg class="b" style="left:768px;top:111px;" width="10" height="9" viewBox="0 0 10 9"><g fill="#1c3f80"><rect x="0.300" y="3" width="4" height="5.500" rx="1.300"/><rect x="5.500" y="3" width="4" height="5.500" rx="1.300"/><rect x="1.300" y="0.500" width="2" height="3"/><rect x="6.500" y="0.500" width="2" height="3"/><rect x="4" y="4" width="2" height="1.500"/></g><rect x="1.300" y="5" width="2" height="2.500" fill="#dce8f8"/><rect x="6.500" y="5" width="2" height="2.500" fill="#dce8f8"/></svg><span class="t" style="left:782px;top:103.0px;font-size:12px;line-height:18px;color:#1e1e1e;letter-spacing:-0.184px;">Rechercher/  Remplacer</span>
<svg class="b" style="left:936px;top:54px;" width="40" height="36" viewBox="0 0 40 36"><path d="M23.200000000000045 2.3000000000000007L33.00000000000004 8.0V18.5L23.200000000000045 23.7L13.400000000000045 18.5V8.0Z" fill="#fff" stroke="#2a2f3a" stroke-width="1.500" stroke-linejoin="round"/><path d="M13.400000000000045 13.5H6.5V28" fill="none" stroke="#2a2f3a" stroke-width="1.400"/><rect x="5" y="28" width="3" height="3" fill="#fff" stroke="#2a2f3a" stroke-width="1.100"/><text x="23.200000000000045" y="18.7" font-family="Liberation Sans, sans-serif" font-size="14.500" font-weight="bold" text-anchor="middle" fill="#16181c">1</text></svg><span class="t" style="left:921px;top:89.0px;font-size:12px;line-height:18px;color:#1e1e1e;letter-spacing:-0.081px;">Etiquette par</span><span class="t" style="left:930px;top:104.0px;font-size:12px;line-height:18px;color:#1e1e1e;letter-spacing:-0.041px;">catégorie</span><svg class="b" style="left:998px;top:52px;" width="40" height="36" viewBox="0 0 40 36"><path d="M21.5 2.3000000000000007L31.3 8.0V18.5L21.5 23.7L11.7 18.5V8.0Z" fill="#f4f4f4" stroke="#b4b4b4" stroke-width="1.100" stroke-linejoin="round"/><path d="M25 4.300000000000001L34.8 10.0V20.5L25 25.7L15.2 20.5V10.0Z" fill="#f4f4f4" stroke="#b4b4b4" stroke-width="1.200" stroke-linejoin="round"/><path d="M11.7 13.5H5.5V29" fill="none" stroke="#b4b4b4" stroke-width="1.100"/><circle cx="5.5" cy="30.5" r="1.400" fill="#f4f4f4" stroke="#b4b4b4" stroke-width="1"/><path d="M15.2 17.0H8.5V31" fill="none" stroke="#b4b4b4" stroke-width="1.100"/><circle cx="8.5" cy="32.5" r="1.400" fill="#f4f4f4" stroke="#b4b4b4" stroke-width="1"/><text x="25" y="20.7" font-family="Liberation Sans, sans-serif" font-size="14.500" font-weight="bold" text-anchor="middle" fill="#bcbcbc">1</text></svg><span class="t" style="left:1006px;top:89.0px;font-size:12px;line-height:18px;color:#b4b4b4;letter-spacing:0.330px;">Tout</span><span class="t" style="left:994px;top:104.0px;font-size:12px;line-height:18px;color:#b4b4b4;letter-spacing:0.033px;">étiqueter</span><svg class="b" style="left:1048px;top:56px;" width="16" height="16" viewBox="0 0 16 16"><g stroke="#b4b4b4" fill="none" stroke-width="1.200"><path d="M4 1.500H12M8 1.500V8M5.500 5.500L8 8L10.500 5.500M1 10.500H15M1 14H15" /><path d="M1 12.200H15" stroke-dasharray="1.500 1.500"/></g></svg><span class="t" style="left:1070px;top:55.0px;font-size:12px;line-height:18px;color:#b4b4b4;letter-spacing:0.075px;">Annotations de poutre</span><div class="b" style="left:1043px;top:75px;width:117px;height:27px;background:#cce4f7;border:4px solid #ee0008;box-sizing:border-box;border-radius:3px;"></div><svg class="b" style="left:1048px;top:80px;" width="16" height="16" viewBox="0 0 16 16"><path d="M5.300 6H2.400V10.500" stroke="#2a2f3a" fill="none" stroke-width="1.100"/><rect x="1.400" y="10.300" width="2.200" height="2.200" fill="#fff" stroke="#2a2f3a" stroke-width=".900"/><path d="M9.900 -0.300L14.500 2.300V7.700L9.900 10.300L5.300 7.700V2.300Z" fill="#fff" stroke="#2a2f3a" stroke-width="1.100" stroke-linejoin="round"/><text x="9.900" y="7.600" font-family="Liberation Sans, sans-serif" font-size="7.500" font-weight="bold" text-anchor="middle" fill="#222">1</text><path d="M7.800 9.300H11L12 10.300H16.600V15.400H7.800Z" fill="#f4bc38" stroke="#7a5510" stroke-width=".900" stroke-linejoin="round"/><path d="M8 11.800H16.400" stroke="#a87818" stroke-width=".800"/><path d="M6.800 9.500V14.500M6 10H7.500M6 12H7.500M6 14H7.500" stroke="#c08a10" stroke-width=".900"/></svg><span class="t" style="left:1070px;top:79.0px;font-size:12px;line-height:18px;color:#262626;letter-spacing:0.220px;">Multi-catégorie</span><svg class="b" style="left:1048px;top:104px;" width="16" height="16" viewBox="0 0 16 16"><path d="M5.300 6H2.400V10.500" stroke="#2a2f3a" fill="none" stroke-width="1.100"/><rect x="1.400" y="10.300" width="2.200" height="2.200" fill="#fff" stroke="#2a2f3a" stroke-width=".900"/><path d="M9.900 -0.300L14.500 2.300V7.700L9.900 10.300L5.300 7.700V2.300Z" fill="#fff" stroke="#2a2f3a" stroke-width="1.100" stroke-linejoin="round"/><text x="9.900" y="7.600" font-family="Liberation Sans, sans-serif" font-size="7.500" font-weight="bold" text-anchor="middle" fill="#222">?</text><path d="M8 11L12 9L16 11V14L12 16L8 14Z" fill="#8a8f98" stroke="#2a2f3a" stroke-width=".800"/></svg><span class="t" style="left:1070px;top:103.0px;font-size:12px;line-height:18px;color:#262626;letter-spacing:-0.051px;">Etiquette de matériau</span><svg class="b" style="left:1198px;top:56px;" width="16" height="16" viewBox="0 0 16 16"><g stroke="#b4b4b4" fill="none" stroke-width="1.200"><rect x="1" y="1" width="13" height="13"/><path d="M1 1L14 14M14 1L1 14"/><rect x="8.500" y="9.500" width="7" height="5.500" rx="2.500" fill="#eee"/></g></svg><span class="t" style="left:1219px;top:55.0px;font-size:12px;line-height:18px;color:#b4b4b4;letter-spacing:-0.137px;">Etiquette de surface</span><svg class="b" style="left:1198px;top:80px;" width="16" height="16" viewBox="0 0 16 16"><g stroke="#b4b4b4" fill="none" stroke-width="1.200"><path d="M1 1H14V14H1Z M1 6H6M9 6H14M6 1V4"/><rect x="8.500" y="9.500" width="7" height="5.500" rx="2.500" fill="#eee"/></g></svg><span class="t" style="left:1219px;top:79.0px;font-size:12px;line-height:18px;color:#b4b4b4;letter-spacing:-0.115px;">Etiquette de pièce</span><svg class="b" style="left:1198px;top:104px;" width="16" height="16" viewBox="0 0 16 16"><g stroke="#b4b4b4" fill="none" stroke-width="1.200"><path d="M1 1H14V14H1Z M1 4H14"/><rect x="8.500" y="9.500" width="7" height="5.500" rx="2.500" fill="#eee"/></g></svg><span class="t" style="left:1219px;top:103.0px;font-size:12px;line-height:18px;color:#b4b4b4;letter-spacing:-0.131px;">Etiquette d'espace</span><svg class="b" style="left:1332px;top:56px;" width="16" height="16" viewBox="0 0 16 16"><g stroke="#b4b4b4" fill="none" stroke-width="1.100"><path d="M0 5H3"/><circle cx="1.500" cy="5" r="1"/><path d="M4 2.500L7.500 .500L11 2.500V7.500L7.500 9.500L4 7.500Z"/><path d="M7.500 3V7M6.800 3.800L7.500 3"/><rect x="8" y="9" width="7" height="6"/><rect x="10" y="11" width="3" height="2"/></g></svg><span class="t" style="left:1353px;top:55.0px;font-size:12px;line-height:18px;color:#b4b4b4;letter-spacing:-0.296px;">Référence de vue</span><svg class="b" style="left:1332px;top:80px;" width="16" height="16" viewBox="0 0 16 16"><g stroke="#b4b4b4" fill="none" stroke-width="1.100"><path d="M1 14V10H5V7H9V4H15"/><path d="M1 14H15V9" stroke-dasharray="1.500 1.200"/><path d="M9 1.500H13M11 1.500V3.500"/></g></svg><span class="t" style="left:1353px;top:79.0px;font-size:12px;line-height:18px;color:#b4b4b4;">Numéro  de marche</span><svg class="b" style="left:1332px;top:104px;" width="16" height="16" viewBox="0 0 16 16"><g stroke="#b4b4b4" fill="none" stroke-width="1.100"><path d="M1 1L5 2L2 5Z M3.500 3.500L13 13M6 11L14 3M9 2L13 1L12.500 5"/></g></svg><span class="t" style="left:1353px;top:103.0px;font-size:12px;line-height:18px;color:#b4b4b4;letter-spacing:0.221px;">Multi- armature</span><svg class="b" style="left:1444.0px;top:111.5px;" width="6" height="3" viewBox="0 0 6 3"><path d="M0 0H6L3.0 3Z" fill="#999"/></svg><svg class="b" style="left:1523px;top:55px;" width="36" height="32" viewBox="0 0 36 32"><defs><radialGradient id="kg" cx=".45" cy=".4" r=".6"><stop offset="0" stop-color="#ffffff"/><stop offset="1" stop-color="#d4d8de"/></radialGradient></defs><g stroke="#2a2f3a" fill="none" stroke-width="1.300"><rect x="12.300" y="2.200" width="14.500" height="14.300" fill="#f4f4f4"/><path d="M12.300 9.500H5.500V27"/></g><path d="M3 26.500H8L5.500 30Z" fill="#2a2f3a"/><circle cx="26.700" cy="19.400" r="6" fill="url(#kg)" stroke="#2a2f3a" stroke-width="1.400"/><text x="18.600" y="13" font-family="Liberation Sans, sans-serif" font-size="10" text-anchor="middle" fill="#222">1</text></svg><span class="t" style="left:1486px;top:89.0px;font-size:12px;line-height:18px;color:#1e1e1e;letter-spacing:0.221px;">Note d'identification</span><svg class="b" style="left:1537.5px;top:108.5px;" width="6" height="3" viewBox="0 0 6 3"><path d="M0 0H6L3.0 3Z" fill="#333"/></svg><svg class="b" style="left:1616px;top:56px;" width="16" height="16" viewBox="0 0 16 16"><g stroke="#b4b4b4" fill="none" stroke-width="1.100"><rect x="1" y="1" width="3" height="3" fill="#c8c8c8"/><rect x="6" y="1" width="3" height="3" fill="#c8c8c8"/><rect x="1" y="6" width="3" height="3" fill="#c8c8c8"/><path d="M7 7H15V14H3V11H11V9"/></g></svg><span class="t" style="left:1637px;top:55.0px;font-size:12px;line-height:18px;color:#b4b4b4;letter-spacing:-0.241px;">Légende de gaines</span><svg class="b" style="left:1616px;top:80px;" width="16" height="16" viewBox="0 0 16 16"><g stroke="#b4b4b4" fill="none" stroke-width="1.100"><rect x="1" y="1" width="3" height="3" fill="#c8c8c8"/><rect x="6" y="1" width="3" height="3" fill="#c8c8c8"/><rect x="1" y="6" width="3" height="3" fill="#c8c8c8"/><path d="M3 14V11H8C9 8 12 8 13 10L15 14Z"/></g></svg><span class="t" style="left:1637px;top:79.0px;font-size:12px;line-height:18px;color:#b4b4b4;letter-spacing:-0.171px;">Légende de canalisations</span><svg class="b" style="left:1616px;top:104px;" width="16" height="16" viewBox="0 0 16 16"><g stroke="#b4b4b4" fill="none" stroke-width="1.300"><rect x="1" y="1.500" width="2.500" height="2.500" fill="#c8c8c8"/><rect x="1" y="6.800" width="2.500" height="2.500" fill="#c8c8c8"/><rect x="1" y="12" width="2.500" height="2.500" fill="#c8c8c8"/><path d="M6 2.800H15M6 8H15M6 13.200H15"/></g></svg><span class="t" style="left:1637px;top:103.0px;font-size:12px;line-height:18px;color:#b4b4b4;letter-spacing:0.107px;">Légende de motif/couleur</span><svg class="b" style="left:1794px;top:55px;" width="34" height="34" viewBox="0 0 34 34"><path d="M16.300 0.500V31.500M1.300 15.500H32" stroke="#2a2f3a" stroke-width="1.300"/><rect x="5" y="4" width="22.600" height="23" rx="4.500" fill="#f4f4f4" stroke="#2a2f3a" stroke-width="1.400"/><path d="M16.300 4H23.100A4.500 4.500 0 0 1 27.600 8.500V15.500H16.300Z M16.300 27H9.500A4.500 4.500 0 0 1 5 22.500V15.500H16.300Z" fill="#32363f"/></svg><span class="t" style="left:1788px;top:89.0px;font-size:12px;line-height:18px;color:#1e1e1e;letter-spacing:-0.098px;">Symbole</span><svg class="b" style="left:1843px;top:56px;" width="16" height="16" viewBox="0 0 16 16"><g stroke="#b4b4b4" fill="none" stroke-width="1.100"><path d="M8 1V15M1 8H6M10 8H15M6 12L8 15L10 12M12.500 6.500L15 8L12.500 9.500M3.500 6.500L1 8L3.500 9.500"/></g></svg><svg class="b" style="left:1867px;top:56px;" width="16" height="16" viewBox="0 0 16 16"><g stroke="#b4b4b4" fill="none" stroke-width="1.100"><path d="M8 1V15M1 8H15M6 12L8 15L10 12M4 6L1 8L4 10"/></g></svg><svg class="b" style="left:1843px;top:80px;" width="16" height="16" viewBox="0 0 16 16"><g stroke="#b4b4b4" fill="none" stroke-width="1.100"><path d="M8 1V15M6 4L8 1M8 15L10 12"/></g></svg><svg class="b" style="left:1867px;top:80px;" width="16" height="16" viewBox="0 0 16 16"><g stroke="#b4b4b4" fill="none" stroke-width="1.100"><path d="M5 15V8L10 3M2 8H9M10 3H15M8 1L10 3L12 1M12 5L15 3"/></g></svg><svg class="b" style="left:1843px;top:104px;" width="16" height="16" viewBox="0 0 16 16"><g stroke="#b4b4b4" fill="none" stroke-width="1.100"><rect x="1" y="4" width="14" height="8"/><path d="M1 8H15M4 4V12M7 4V12M10 4V12M13 4V12"/></g></svg><svg class="b" style="left:1867px;top:104px;" width="16" height="16" viewBox="0 0 16 16"><g stroke="#b4b4b4" fill="none" stroke-width="1.100"><rect x="2" y="1" width="12" height="14"/><path d="M5 15L8 1M8 15L11 1M2 10L5 1"/></g></svg>
<svg class="b" style="left:8px;top:150px;" width="17" height="13" viewBox="0 0 17 13"><path d="M1 11.500V1.500H5.500L7 3H12V5" fill="#f4f4f4" stroke="#2e323a" stroke-width="1.300"/><path d="M1 11.500L4 5H16L12.500 11.500Z" fill="#e4e6ea" stroke="#2e323a" stroke-width="1.300" stroke-linejoin="round"/></svg><svg class="b" style="left:33px;top:149px;" width="15" height="14" viewBox="0 0 15 14"><path d="M1 1H14V13H2.500L1 11.500Z" fill="#4a4f5a" stroke="#2e323a" stroke-width="1.200"/><rect x="3.500" y="1.500" width="8" height="5" fill="#e8eaee"/><rect x="4.500" y="8.500" width="6" height="4.500" fill="#f4f4f4"/><rect x="5.500" y="9.500" width="1.500" height="2.500" fill="#2e323a"/></svg><svg class="b" style="left:56px;top:148px;" width="17" height="17" viewBox="0 0 17 17"><g fill="#d4d4d4" stroke="#a8a8a8" stroke-width="1"><path d="M4 3L8 1L12 3V7L8 9L4 7Z M1 8L4 6.500L8 9V13L5 14.500L1 12.500Z M8 9L12 7L15 8.500V12.500L11 14.500L8 13Z"/></g><circle cx="12" cy="12.500" r="3.500" fill="#b8b8b8"/></svg><svg class="b" style="left:79.0px;top:155.5px;" width="5" height="3" viewBox="0 0 5 3"><path d="M0 0H5L2.5 3Z" fill="#333"/></svg><svg class="b" style="left:92px;top:149px;" width="16" height="13" viewBox="0 0 16 13"><path d="M1 5.500L6.500 1V3.500H10C13 3.500 14.500 5.500 14.500 8V12H12V8.500C12 7 11.500 6.500 10 6.500H6.500V10Z" fill="#fff" stroke="#2e323a" stroke-width="1.200" stroke-linejoin="round"/></svg><svg class="b" style="left:114.5px;top:155.5px;" width="5" height="3" viewBox="0 0 5 3"><path d="M0 0H5L2.5 3Z" fill="#333"/></svg><svg class="b" style="left:127px;top:149px;" width="16" height="13" viewBox="0 0 16 13"><path d="M15 5.500L9.500 1V3.500H6C3 3.500 1.500 5.500 1.500 8V12H4V8.500C4 7 4.500 6.500 6 6.500H9.500V10Z" fill="#d4d4d4" stroke="#aaaaaa" stroke-width="1.100" stroke-linejoin="round"/></svg><svg class="b" style="left:151.0px;top:155.5px;" width="5" height="3" viewBox="0 0 5 3"><path d="M0 0H5L2.5 3Z" fill="#888"/></svg><svg class="b" style="left:164px;top:149px;" width="17" height="16" viewBox="0 0 17 16"><path d="M4 5V1.500H13V5" fill="#fff" stroke="#2e323a" stroke-width="1.300"/><rect x="1" y="5" width="15" height="7.500" rx="1.500" fill="#fff" stroke="#2e323a" stroke-width="1.400"/><rect x="4" y="9.500" width="9" height="5.500" fill="#fff" stroke="#2e323a" stroke-width="1.300"/><rect x="6" y="11.500" width="5" height="1.500" fill="#a8c0d8"/></svg><div class="b" style="left:187px;top:147px;width:1px;height:20px;background:#b4b4b4;"></div><svg class="b" style="left:195px;top:151px;" width="16" height="12" viewBox="0 0 16 12"><path d="M1 3.500H15M1 3.500L4 1.500M1 3.500L4 5.500M15 3.500L12 1.500M15 3.500L12 5.500" stroke="#2e323a" stroke-width="1.200" fill="none"/><rect x="0.500" y="7" width="15" height="4" rx="1" fill="#f0b820" stroke="#d49a00" stroke-width=".800"/></svg><svg class="b" style="left:218.0px;top:156.0px;" width="5" height="3" viewBox="0 0 5 3"><path d="M0 0H5L2.5 3Z" fill="#333"/></svg><svg class="b" style="left:230px;top:148px;" width="18" height="17" viewBox="0 0 18 17"><g stroke="#2e323a" stroke-width="1.200" fill="none"><path d="M1 12L5 16M12 1L16 5M4 13L13 4"/></g><path d="M3.500 13.500L4.500 9.500L7.500 12.500Z M13.500 3.500L9.500 4.500L12.500 7.500Z" fill="#2e323a"/></svg><svg class="b" style="left:255px;top:149px;" width="16" height="15" viewBox="0 0 16 15"><path d="M6 4.500L10 1.500L14.500 4.500V8.500L10 11.500L6 8.500Z" fill="#fff" stroke="#2e323a" stroke-width="1.100"/><path d="M6 6.500H2V12" fill="none" stroke="#2e323a" stroke-width="1.100"/><circle cx="2" cy="13" r="1.300" fill="#fff" stroke="#2e323a"/><path d="M10.300 4V9M9.300 5L10.300 4" stroke="#2e323a" fill="none" stroke-width="1"/></svg><span class="t" style="left:279.5px;top:146.0px;font-size:19px;line-height:20px;color:#3a3a3a;font-weight:bold;">A</span><div class="b" style="left:302px;top:147px;width:1px;height:20px;background:#b4b4b4;"></div><svg class="b" style="left:310px;top:149px;" width="16" height="16" viewBox="0 0 16 16"><path d="M1 7L7 1.500L15 5V11L8 14.500L2 12V7.500Z" fill="#fff" stroke="#2e323a" stroke-width="1.200" stroke-linejoin="round"/><path d="M7 1.500L9 7.500V14M9 7.500L15 5M1 7L3 6.500" fill="none" stroke="#2e323a" stroke-width="1.100"/><path d="M3 12.500V8.500L5.500 9.500V13.500Z" fill="#2e323a"/></svg><svg class="b" style="left:333.0px;top:155.5px;" width="5" height="3" viewBox="0 0 5 3"><path d="M0 0H5L2.5 3Z" fill="#333"/></svg><svg class="b" style="left:346px;top:149px;" width="15" height="16" viewBox="0 0 15 16"><circle cx="5.500" cy="7" r="3.800" fill="#e0e0e0" stroke="#9a9a9a" stroke-width="1.200"/><path d="M7 2.500L13.500 7L7 11.500" fill="#b4b4b4"/><path d="M5.500 11V15" stroke="#9a9a9a"/></svg><div class="b" style="left:366px;top:146px;width:24px;height:22px;background:#b5d6f5;border:1px solid #2f7fc2;box-sizing:border-box;"></div><svg class="b" style="left:369px;top:149px;" width="18" height="16" viewBox="0 0 18 16"><path d="M7.500 15L11 1" stroke="#2a7fd0" stroke-width="1.200"/><path d="M1 3H8.500" stroke="#2e323a" stroke-width="3"/><path d="M1 8.500H7.500" stroke="#2e323a" stroke-width="2.400"/><path d="M1 13.500H6" stroke="#2e323a" stroke-width="1.800"/><path d="M11.500 3H17M10.500 8.500H17M9 13.500H17" stroke="#2e323a" stroke-width="1"/></svg><div class="b" style="left:394px;top:147px;width:1px;height:20px;background:#b4b4b4;"></div><svg class="b" style="left:402px;top:149px;" width="17" height="17" viewBox="0 0 17 17"><rect x="1" y="1" width="5.500" height="5.500" fill="#e8e8e8" stroke="#aaa"/><rect x="9" y="1" width="5.500" height="5.500" fill="#e8e8e8" stroke="#aaa"/><rect x="1" y="8.500" width="5.500" height="5.500" fill="#e8e8e8" stroke="#aaa"/><path d="M9 9L15.500 15.500M15.500 9L9 15.500" stroke="#d82020" stroke-width="2.200"/></svg><svg class="b" style="left:425px;top:148px;" width="18" height="18" viewBox="0 0 18 18"><rect x="1" y="2" width="11" height="8" fill="#fff" stroke="#2e323a" stroke-width="1.300"/><rect x="5.500" y="8" width="11" height="8.500" fill="#fff" stroke="#2e323a" stroke-width="1.300"/><path d="M5.500 9.500H16.500" stroke="#2e323a" stroke-width="1.600"/><path d="M14.500 4.500V1M14.500 1L13 2.500M14.500 1L16 2.500M2.500 12V16M2.500 16L1 14.500M2.500 16L4 14.500" stroke="#2e323a" fill="none" stroke-width="1"/></svg><svg class="b" style="left:446.0px;top:155.5px;" width="5" height="3" viewBox="0 0 5 3"><path d="M0 0H5L2.5 3Z" fill="#333"/></svg><svg class="b" style="left:459px;top:152px;" width="9" height="8" viewBox="0 0 9 8"><path d="M0 1H9" stroke="#333" stroke-width="1.400"/><path d="M0.500 3.500H8.500L4.500 7.500Z" fill="#333"/></svg>
<div class="b" style="left:1090px;top:113.5px;width:347px;height:96.5px;background:rgba(243,243,246,0.870);border:1px solid #9c9c9c;box-sizing:border-box;box-shadow:1px 1px 2px rgba(0,0,0,.12);"></div><span class="t" style="left:1097px;top:120.0px;font-size:12px;line-height:18px;color:#585858;font-weight:bold;letter-spacing:0.013px;">Etiquette multicatégorie</span><span class="t" style="left:1097px;top:141.0px;font-size:12px;line-height:18px;color:#585858;letter-spacing:-0.141px;">Attache des étiquettes aux éléments de plusieurs catégories par</span><span class="t" style="left:1097px;top:156.0px;font-size:12px;line-height:18px;color:#585858;letter-spacing:-0.068px;">rapport à un paramètre partagé.</span><div class="b" style="left:1092px;top:180.5px;width:343px;height:1px;background:#bdbdbd;"></div><span class="t" style="left:1097px;top:186.0px;font-size:12px;line-height:18px;color:#585858;font-weight:bold;letter-spacing:-0.195px;">Appuyez sur F1 pour obtenir de l'aide</span><svg class="b" style="left:841px;top:90px;" width="260" height="127" viewBox="0 0 260 127"><path d="M0 46.500H150L247 7L200 46.500H250V126H0Z" fill="#2b7bb9"/></svg><span class="t" style="left:853px;top:155.0px;font-size:18px;line-height:22px;color:#fff;">Cliquer sur [Multi-catégorie]</span><span class="t" style="left:938px;top:176.0px;font-size:18px;line-height:22px;color:#fff;letter-spacing:-0.176px;">bouton</span>
</body></html>
